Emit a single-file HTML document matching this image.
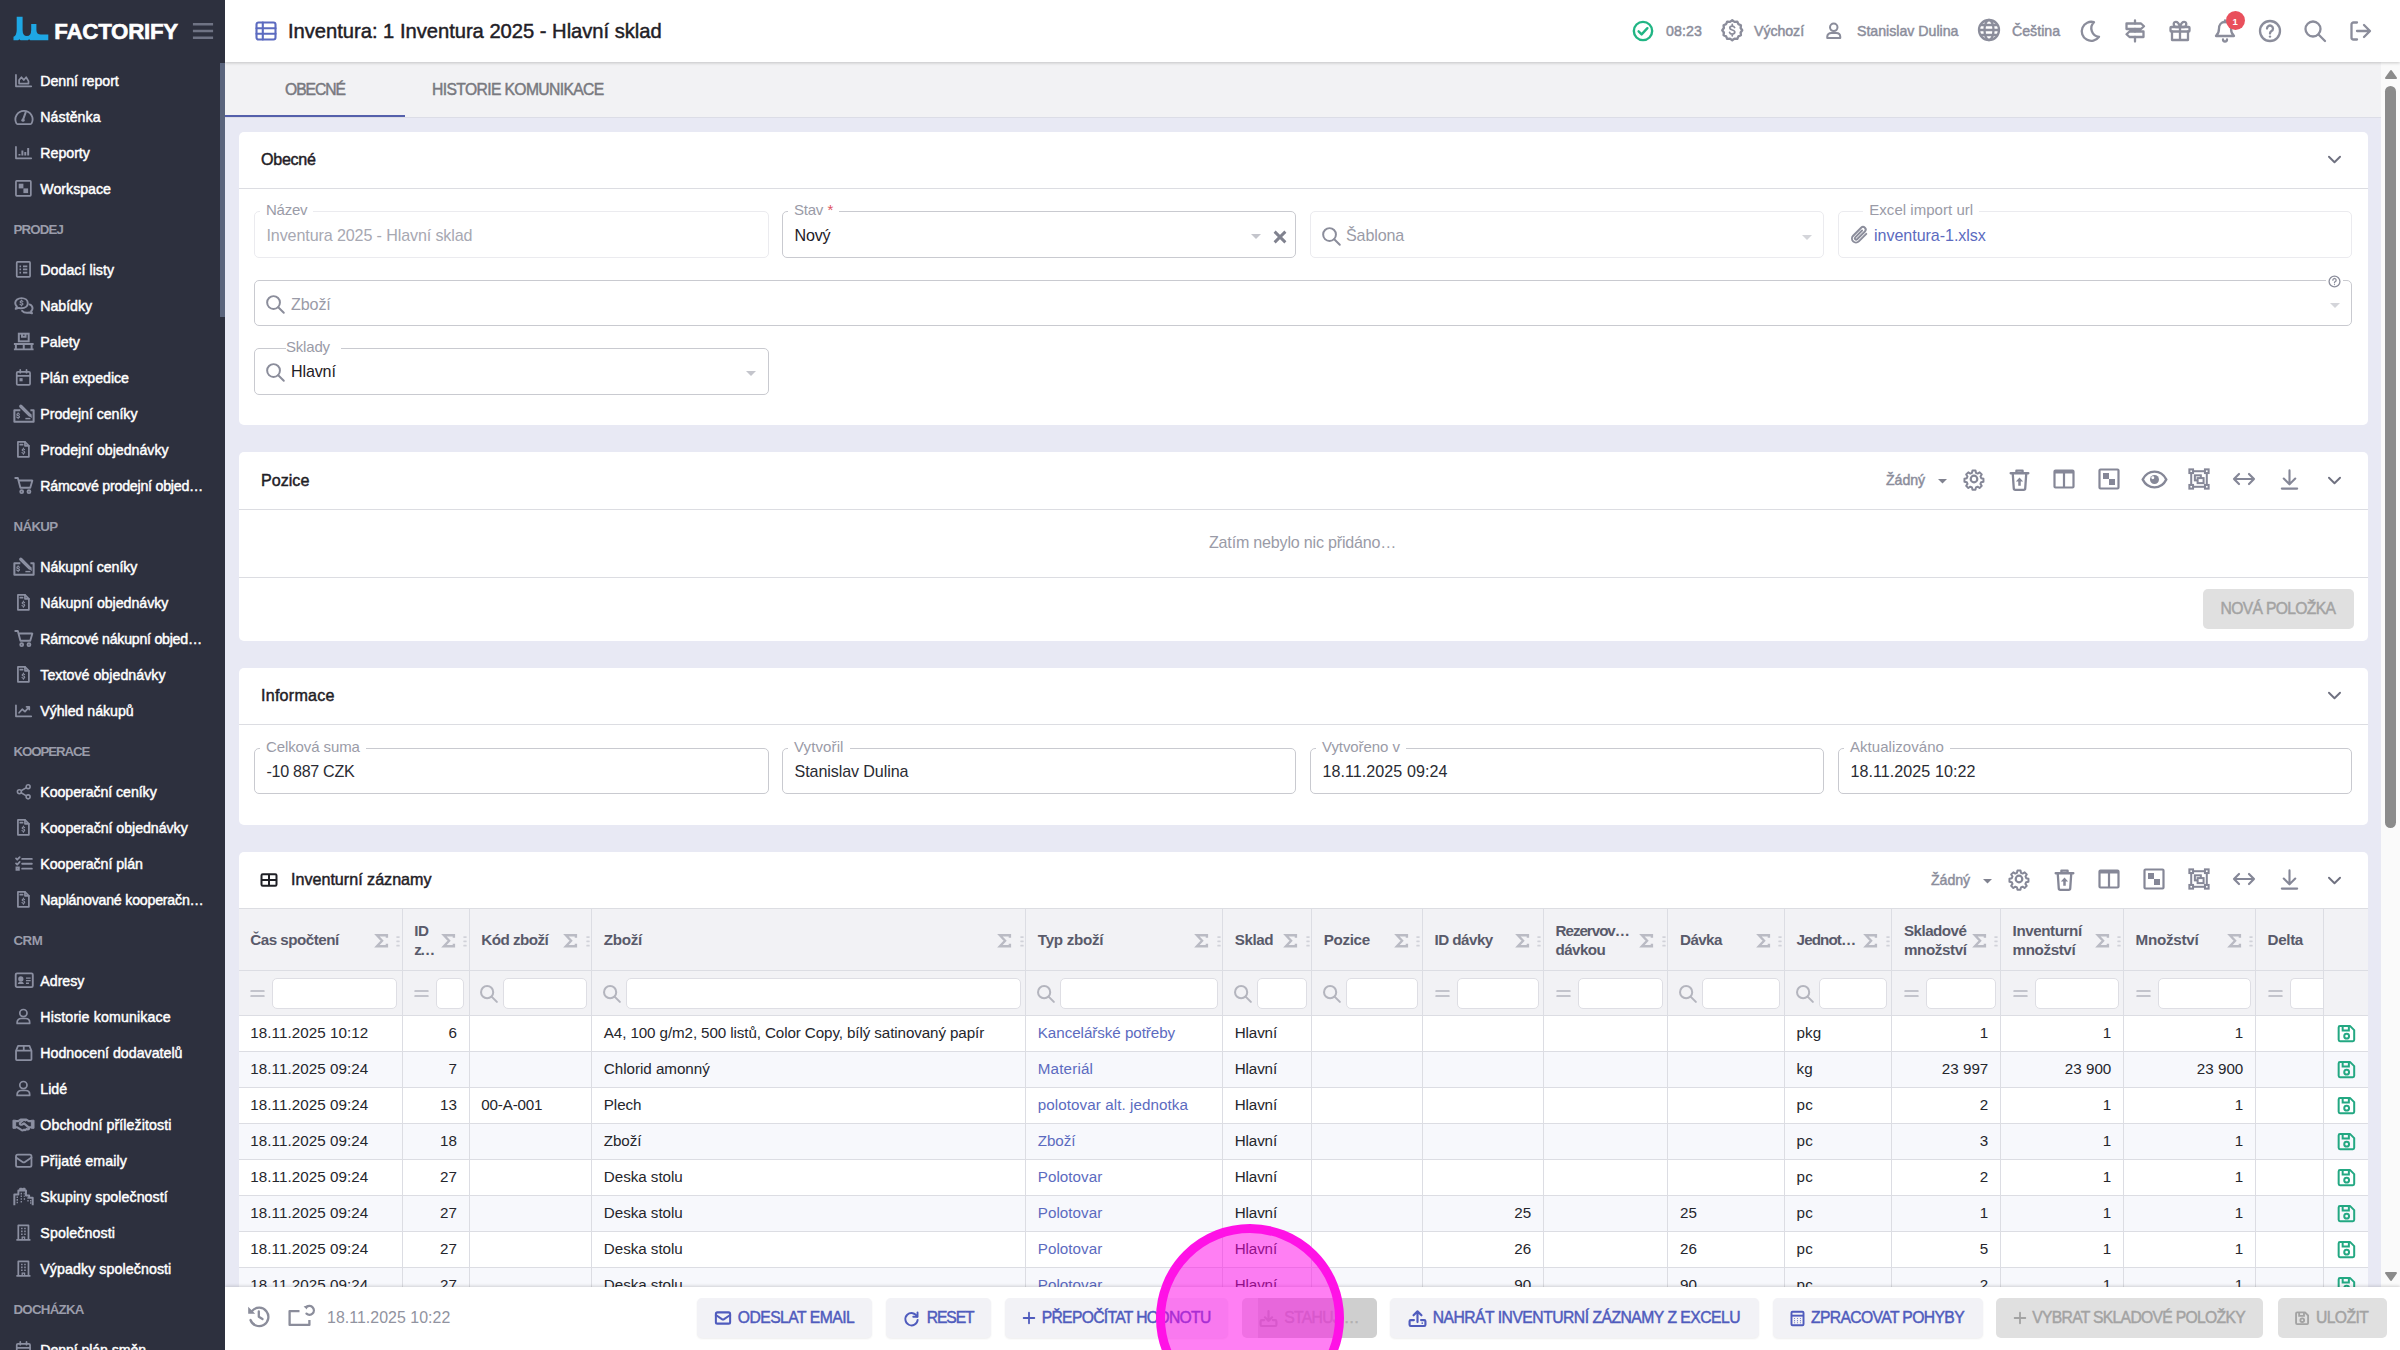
<!DOCTYPE html><html lang="cs"><head><meta charset="utf-8"><title>Inventura</title><style>
*{box-sizing:border-box;margin:0;padding:0}
html,body{width:2400px;height:1350px;overflow:hidden;background:#e8e9f4;font-family:"Liberation Sans",sans-serif;color:#1f2026}
.a{position:absolute}
.t{position:absolute;white-space:nowrap;height:20px;line-height:20px}
.ic{position:absolute;display:block;overflow:visible}
.card{position:absolute;left:239px;width:2129px;background:#fff;border-radius:5px}
.hl{position:absolute;left:0;right:0;height:1px;background:#dcdde2}
.fld{position:absolute;border:1px solid #c9cad0;border-radius:5px;background:#fff}
.fld.dis{border-color:#ebebef}
.lbl{position:absolute;background:#fff;padding:0 6px;height:16px;line-height:16px;white-space:nowrap;color:#9a9ba7}
.btn{position:absolute;top:1298px;height:40px;border-radius:5px;background:#f2f2f6;box-shadow:0 1px 2px rgba(0,0,0,.07);color:#4f5bbd}
.btn.dis{background:#e0e0e0;color:#a3a3a3;box-shadow:none}
.vl{position:absolute;top:0;bottom:0;width:1px;background:#dcdde3}
.fi{position:absolute;top:978px;height:31px;background:#fff;border:1px solid #dedee4;border-radius:5px}
</style></head><body><div class="a" style="left:225px;top:62px;width:2175px;height:56px;background:#f2f2f4;border-bottom:1px solid #dcdde6"></div><div class="a" style="left:225px;top:115px;width:180px;height:2px;background:#5560ab"></div><div class="t" style="left:285px;top:80px;"><span style="font-size:15.7px;letter-spacing:-1.076px;-webkit-text-stroke:0.45px;color:#78797f;">OBECNÉ</span></div><div class="t" style="left:432px;top:80px;"><span style="font-size:15.7px;letter-spacing:-0.631px;-webkit-text-stroke:0.45px;color:#78797f;">HISTORIE KOMUNIKACE</span></div><div class="card" style="top:132px;height:293px"><div class="hl" style="top:56px"></div></div><div class="t" style="left:261px;top:149px;"><span style="font-size:16.1px;letter-spacing:-0.273px;-webkit-text-stroke:0.45px;color:#1f2026;">Obecné</span></div><svg class="ic" width="19" height="19" viewBox="0 0 24 24" fill="none" stroke="currentColor" stroke-width="2.4" style="color:#6f7180;left:2324.5px;top:149.5px;"><path d="M5 8.500l7 7 7-7" stroke-linecap="round" stroke-linejoin="round"/></svg><div class="fld dis" style="left:254px;top:211px;width:515px;height:47px"></div><div class="lbl" style="left:260px;top:201.5px;"><span style="font-size:15px;letter-spacing:-0.244px;color:#9a9ba7;">Název</span></div><div class="t" style="left:266.5px;top:225px;"><span style="font-size:16.1px;letter-spacing:-0.118px;color:#a7a8b2;">Inventura 2025 - Hlavní sklad</span></div><div class="fld" style="left:782px;top:211px;width:514px;height:47px"></div><div class="lbl" style="left:788px;top:201.5px;"><span style="font-size:15px;letter-spacing:-0.219px;color:#9a9ba7;">Stav</span><span style="font-size:15px;letter-spacing:0.086px;color:#e0525e;"> *</span></div><div class="t" style="left:794.5px;top:225px;"><span style="font-size:16.1px;letter-spacing:-0.180px;color:#1f2026;">Nový</span></div><svg class="ic" style="left:1250.5px;top:234.0px" width="10" height="5.0" viewBox="0 0 10 5"><path d="M0 0h10L5 5z" fill="#c4c5cc"/></svg><svg class="ic" style="left:1272.500px;top:229.500px" width="14" height="14" viewBox="0 0 13 13"><path d="M1.500 1.500l10 10M11.500 1.500l-10 10" stroke="#80828f" stroke-width="2.700"/></svg><div class="fld dis" style="left:1310px;top:211px;width:514px;height:47px"></div><svg class="ic" width="20.5" height="20.5" viewBox="0 0 24 24" fill="none" stroke="currentColor" stroke-width="2.3" style="color:#8b8d9b;left:1320.55px;top:225.55px;"><circle cx="10" cy="10" r="7.500"/><path d="M15.500 15.500L22 22" stroke-linecap="round"/></svg><div class="t" style="left:1346px;top:225px;"><span style="font-size:16.1px;letter-spacing:-0.141px;color:#9a9ba7;">Šablona</span></div><svg class="ic" style="left:1801.5px;top:234.5px" width="10" height="5.0" viewBox="0 0 10 5"><path d="M0 0h10L5 5z" fill="#d4d5da"/></svg><div class="fld dis" style="left:1838px;top:211px;width:514px;height:47px"></div><div class="lbl" style="left:1863.3px;top:201.5px;"><span style="font-size:15px;letter-spacing:0.031px;color:#9a9ba7;">Excel import url</span></div><svg class="ic" width="22.5" height="22.5" viewBox="0 0 24 24" fill="none" stroke="currentColor" stroke-width="2.1" style="color:#8b8d9b;left:1847.75px;top:224.25px;"><path d="M19.500 10.500l-8 8a4.200 4.200 0 0 1-6-6l8.500-8.500a2.800 2.800 0 0 1 4 4l-8.300 8.300a1.400 1.400 0 0 1-2-2l7.300-7.300" stroke-linecap="round" stroke-linejoin="round"/></svg><div class="t" style="left:1874px;top:225px;"><span style="font-size:16.1px;letter-spacing:-0.053px;color:#5c6bc0;">inventura-1.xlsx</span></div><div class="fld" style="left:254px;top:280px;width:2098px;height:46px"></div><svg class="ic" width="20.5" height="20.5" viewBox="0 0 24 24" fill="none" stroke="currentColor" stroke-width="2.3" style="color:#8b8d9b;left:264.95px;top:294.05px;"><circle cx="10" cy="10" r="7.500"/><path d="M15.500 15.500L22 22" stroke-linecap="round"/></svg><div class="t" style="left:291px;top:294px;"><span style="font-size:16.1px;letter-spacing:-0.113px;color:#9a9ba7;">Zboží</span></div><div class="a" style="left:2326px;top:273px;width:17px;height:16px;background:#fff"></div><svg class="ic" width="13" height="13" viewBox="0 0 24 24" fill="none" stroke="currentColor" stroke-width="2.4" style="color:#8b8d9b;left:2327.8px;top:274.5px;"><circle cx="12" cy="12" r="10"/><path d="M9 9.500a3 3 0 1 1 4.500 2.600c-1 .6-1.500 1.200-1.500 2.400" stroke-linecap="round" stroke-linejoin="round"/><circle cx="12" cy="17.600" r="1.200" fill="currentColor" stroke="none"/></svg><svg class="ic" style="left:2330.0px;top:302.5px" width="10" height="5.0" viewBox="0 0 10 5"><path d="M0 0h10L5 5z" fill="#d4d5da"/></svg><div class="fld" style="left:254px;top:348px;width:515px;height:47px"></div><div class="lbl" style="left:286px;top:338.5px;padding:0 11px 0 0;"><span style="font-size:15px;letter-spacing:-0.193px;color:#9a9ba7;">Sklady</span></div><svg class="ic" width="20.5" height="20.5" viewBox="0 0 24 24" fill="none" stroke="currentColor" stroke-width="2.3" style="color:#8b8d9b;left:264.95px;top:362.05px;"><circle cx="10" cy="10" r="7.500"/><path d="M15.500 15.500L22 22" stroke-linecap="round"/></svg><div class="t" style="left:291px;top:361px;"><span style="font-size:16.1px;letter-spacing:-0.154px;color:#1f2026;">Hlavní</span></div><svg class="ic" style="left:745.5px;top:371.0px" width="10" height="5.0" viewBox="0 0 10 5"><path d="M0 0h10L5 5z" fill="#c4c5cc"/></svg><div class="card" style="top:452px;height:188.500px"><div class="hl" style="top:57px"></div><div class="hl" style="top:125px"></div></div><div class="t" style="left:261px;top:470px;"><span style="font-size:16.1px;letter-spacing:0.016px;-webkit-text-stroke:0.45px;color:#1f2026;">Pozice</span></div><div class="t" style="left:1886px;top:470px;"><span style="font-size:14.2px;letter-spacing:-0.078px;-webkit-text-stroke:0.45px;color:#8b8d9b;">Žádný</span></div><svg class="ic" style="left:1937.5px;top:479.25px" width="9" height="4.5" viewBox="0 0 10 5"><path d="M0 0h10L5 5z" fill="#80828f"/></svg><svg class="ic" width="24" height="24" viewBox="0 0 24 24" fill="none" stroke="currentColor" stroke-width="2.2" style="color:#858797;left:1961.5px;top:467.3px;"><circle cx="12" cy="12" r="3.300"/><path d="M10.300 2.500h3.400l.5 2.600 1.800.9 2.300-1.400 2.300 2.400-1.400 2.200.8 1.900 2.500.6v3.300l-2.600.6-.8 1.800 1.500 2.200-2.400 2.400-2.200-1.500-1.800.8-.6 2.600h-3.300l-.6-2.600-1.800-.8-2.200 1.500-2.400-2.400 1.500-2.200-.8-1.800-2.600-.6v-3.300l2.600-.6.800-1.900-1.500-2.200 2.400-2.400 2.200 1.400 1.800-.9z" stroke-linejoin="round" transform="translate(12 12) scale(.9) translate(-12 -12)"/></svg><svg class="ic" width="25" height="25" viewBox="0 0 24 24" fill="none" stroke="currentColor" stroke-width="2.2" style="color:#858797;left:2006.5px;top:466.8px;"><path d="M3.500 6h17M9 6V3.500h6V6M5.500 6l1 14.500a1.500 1.500 0 0 0 1.500 1.500h8a1.500 1.500 0 0 0 1.500-1.500l1-14.500" stroke-linecap="round" stroke-linejoin="round"/><path d="M12 10l-3.500 4h2.300v4h2.400v-4h2.300z" fill="currentColor" stroke="none"/></svg><svg class="ic" width="24" height="24" viewBox="0 0 24 24" fill="none" stroke="currentColor" stroke-width="2.2" style="color:#858797;left:2052.0px;top:467.3px;"><rect x="2.500" y="3.500" width="19" height="17" rx="1"/><path d="M2.500 5h19" stroke-width="3"/><path d="M12 4v16.500"/></svg><svg class="ic" width="24" height="24" viewBox="0 0 24 24" fill="none" stroke="currentColor" stroke-width="2.2" style="color:#858797;left:2097.0px;top:467.3px;"><rect x="2.500" y="2.500" width="19" height="19" rx="1"/><rect x="6" y="6" width="6" height="6" fill="currentColor" stroke="none"/><rect x="12" y="12" width="6" height="6" fill="currentColor" stroke="none"/></svg><svg class="ic" width="27" height="27" viewBox="0 0 24 24" fill="none" stroke="currentColor" stroke-width="2.2" style="color:#858797;left:2140.5px;top:465.8px;"><path d="M1.500 12C4 7 8 5 12 5s8 2 10.500 7C20 17 16 19 12 19S4 17 1.500 12z" stroke-linejoin="round"/><circle cx="12" cy="12" r="4" fill="currentColor" stroke="none"/><circle cx="10.500" cy="10.500" r="1.300" fill="#fff" stroke="none"/></svg><svg class="ic" width="22" height="22" viewBox="0 0 24 24" fill="none" stroke="currentColor" stroke-width="2.2" style="color:#858797;left:2188.0px;top:468.3px;"><rect x="3.500" y="3.500" width="17" height="17"/><rect x="1.500" y="1.500" width="4" height="4" fill="#fff"/><rect x="18.500" y="1.500" width="4" height="4" fill="#fff"/><rect x="1.500" y="18.500" width="4" height="4" fill="#fff"/><rect x="18.500" y="18.500" width="4" height="4" fill="#fff"/><rect x="7.500" y="8" width="6.500" height="5.500"/><rect x="10.500" y="11" width="6.500" height="5.500" fill="#fff"/></svg><svg class="ic" width="24" height="24" viewBox="0 0 24 24" fill="none" stroke="currentColor" stroke-width="2.2" style="color:#858797;left:2232.0px;top:467.3px;"><path d="M2 12h20M7 7l-5 5 5 5M17 7l5 5-5 5" stroke-linecap="round" stroke-linejoin="round"/></svg><svg class="ic" width="23" height="23" viewBox="0 0 24 24" fill="none" stroke="currentColor" stroke-width="2.2" style="color:#858797;left:2277.5px;top:467.8px;"><path d="M12 2.500v14M6 11l6 6 6-6M4 21.500h16" stroke-linecap="round" stroke-linejoin="round"/></svg><svg class="ic" width="19" height="19" viewBox="0 0 24 24" fill="none" stroke="currentColor" stroke-width="2.4" style="color:#6f7180;left:2324.5px;top:470.5px;"><path d="M5 8.500l7 7 7-7" stroke-linecap="round" stroke-linejoin="round"/></svg><div class="t" style="left:1209px;top:532px;"><span style="font-size:16.1px;letter-spacing:-0.209px;color:#9a9ba7;">Zatím nebylo nic přidáno…</span></div><div class="a" style="left:2203.300px;top:589.300px;width:150.700px;height:40px;border-radius:5px;background:#e0e0e0"></div><div class="t" style="left:2220.5px;top:599px;"><span style="font-size:15.7px;letter-spacing:-0.674px;-webkit-text-stroke:0.45px;color:#a3a3a3;">NOVÁ POLOŽKA</span></div><div class="card" style="top:668.300px;height:156.700px"><div class="hl" style="top:56px"></div></div><div class="t" style="left:261px;top:685px;"><span style="font-size:16.1px;letter-spacing:0.241px;-webkit-text-stroke:0.45px;color:#1f2026;">Informace</span></div><svg class="ic" width="19" height="19" viewBox="0 0 24 24" fill="none" stroke="currentColor" stroke-width="2.4" style="color:#6f7180;left:2324.5px;top:686.0px;"><path d="M5 8.500l7 7 7-7" stroke-linecap="round" stroke-linejoin="round"/></svg><div class="fld" style="left:254px;top:748px;width:515px;height:46px"></div><div class="lbl" style="left:260px;top:738.5px;"><span style="font-size:15px;letter-spacing:-0.105px;color:#9a9ba7;">Celková suma</span></div><div class="t" style="left:266.5px;top:761px;"><span style="font-size:16.1px;letter-spacing:-0.307px;color:#2a2b33;">-10 887 CZK</span></div><div class="fld" style="left:782px;top:748px;width:514px;height:46px"></div><div class="lbl" style="left:788px;top:738.5px;"><span style="font-size:15px;letter-spacing:0.119px;color:#9a9ba7;">Vytvořil</span></div><div class="t" style="left:794.5px;top:761px;"><span style="font-size:16.1px;letter-spacing:-0.093px;color:#2a2b33;">Stanislav Dulina</span></div><div class="fld" style="left:1310px;top:748px;width:514px;height:46px"></div><div class="lbl" style="left:1316px;top:738.5px;"><span style="font-size:15px;letter-spacing:-0.067px;color:#9a9ba7;">Vytvořeno v</span></div><div class="t" style="left:1322.5px;top:761px;"><span style="font-size:16.1px;letter-spacing:0.051px;color:#2a2b33;">18.11.2025 09:24</span></div><div class="fld" style="left:1838px;top:748px;width:514px;height:46px"></div><div class="lbl" style="left:1844px;top:738.5px;"><span style="font-size:15px;letter-spacing:0.042px;color:#9a9ba7;">Aktualizováno</span></div><div class="t" style="left:1850.5px;top:761px;"><span style="font-size:16.1px;letter-spacing:0.051px;color:#2a2b33;">18.11.2025 10:22</span></div><div class="card" style="top:852px;height:440px;border-radius:5px 5px 0 0"></div><svg class="ic" width="20" height="20" viewBox="0 0 24 24" fill="none" stroke="currentColor" stroke-width="2.4" style="color:#1f2026;left:259.0px;top:870.0px;"><rect x="3" y="5" width="18" height="14" rx="1.5"/><path d="M3 12h18M12 5v14"/></svg><div class="t" style="left:291px;top:869px;"><span style="font-size:16.1px;letter-spacing:0.005px;-webkit-text-stroke:0.45px;color:#1f2026;">Inventurní záznamy</span></div><div class="t" style="left:1931px;top:870px;"><span style="font-size:14.2px;letter-spacing:-0.078px;-webkit-text-stroke:0.45px;color:#8b8d9b;">Žádný</span></div><svg class="ic" style="left:1982.5px;top:879.25px" width="9" height="4.5" viewBox="0 0 10 5"><path d="M0 0h10L5 5z" fill="#80828f"/></svg><svg class="ic" width="24" height="24" viewBox="0 0 24 24" fill="none" stroke="currentColor" stroke-width="2.2" style="color:#858797;left:2007.0px;top:867.3px;"><circle cx="12" cy="12" r="3.300"/><path d="M10.300 2.500h3.400l.5 2.600 1.800.9 2.300-1.400 2.300 2.400-1.400 2.200.8 1.900 2.500.6v3.300l-2.600.6-.8 1.800 1.500 2.200-2.400 2.400-2.200-1.500-1.800.8-.6 2.600h-3.300l-.6-2.600-1.800-.8-2.200 1.500-2.400-2.400 1.500-2.200-.8-1.800-2.600-.6v-3.300l2.600-.6.800-1.900-1.500-2.200 2.400-2.400 2.200 1.400 1.800-.9z" stroke-linejoin="round" transform="translate(12 12) scale(.9) translate(-12 -12)"/></svg><svg class="ic" width="25" height="25" viewBox="0 0 24 24" fill="none" stroke="currentColor" stroke-width="2.2" style="color:#858797;left:2051.5px;top:866.8px;"><path d="M3.500 6h17M9 6V3.500h6V6M5.500 6l1 14.500a1.500 1.500 0 0 0 1.500 1.500h8a1.500 1.500 0 0 0 1.500-1.500l1-14.500" stroke-linecap="round" stroke-linejoin="round"/><path d="M12 10l-3.500 4h2.300v4h2.400v-4h2.300z" fill="currentColor" stroke="none"/></svg><svg class="ic" width="24" height="24" viewBox="0 0 24 24" fill="none" stroke="currentColor" stroke-width="2.2" style="color:#858797;left:2097.0px;top:867.3px;"><rect x="2.500" y="3.500" width="19" height="17" rx="1"/><path d="M2.500 5h19" stroke-width="3"/><path d="M12 4v16.500"/></svg><svg class="ic" width="24" height="24" viewBox="0 0 24 24" fill="none" stroke="currentColor" stroke-width="2.2" style="color:#858797;left:2142.0px;top:867.3px;"><rect x="2.500" y="2.500" width="19" height="19" rx="1"/><rect x="6" y="6" width="6" height="6" fill="currentColor" stroke="none"/><rect x="12" y="12" width="6" height="6" fill="currentColor" stroke="none"/></svg><svg class="ic" width="22" height="22" viewBox="0 0 24 24" fill="none" stroke="currentColor" stroke-width="2.2" style="color:#858797;left:2188.0px;top:868.3px;"><rect x="3.500" y="3.500" width="17" height="17"/><rect x="1.500" y="1.500" width="4" height="4" fill="#fff"/><rect x="18.500" y="1.500" width="4" height="4" fill="#fff"/><rect x="1.500" y="18.500" width="4" height="4" fill="#fff"/><rect x="18.500" y="18.500" width="4" height="4" fill="#fff"/><rect x="7.500" y="8" width="6.500" height="5.500"/><rect x="10.500" y="11" width="6.500" height="5.500" fill="#fff"/></svg><svg class="ic" width="24" height="24" viewBox="0 0 24 24" fill="none" stroke="currentColor" stroke-width="2.2" style="color:#858797;left:2232.0px;top:867.3px;"><path d="M2 12h20M7 7l-5 5 5 5M17 7l5 5-5 5" stroke-linecap="round" stroke-linejoin="round"/></svg><svg class="ic" width="23" height="23" viewBox="0 0 24 24" fill="none" stroke="currentColor" stroke-width="2.2" style="color:#858797;left:2277.5px;top:867.8px;"><path d="M12 2.500v14M6 11l6 6 6-6M4 21.500h16" stroke-linecap="round" stroke-linejoin="round"/></svg><svg class="ic" width="19" height="19" viewBox="0 0 24 24" fill="none" stroke="currentColor" stroke-width="2.4" style="color:#6f7180;left:2324.5px;top:870.5px;"><path d="M5 8.500l7 7 7-7" stroke-linecap="round" stroke-linejoin="round"/></svg><div class="a" style="left:239px;top:908px;width:2129.300px;height:107.500px;background:#f2f2f5;border-top:1px solid #dcdde2"></div><div class="a" style="left:239px;top:970px;width:2129.300px;height:1px;background:#dcdde3"></div><div class="a" style="left:239px;top:1015px;width:2129.300px;height:36px;background:#fff;border-top:1px solid #dcdde3"></div><div class="a" style="left:239px;top:1051px;width:2129.300px;height:36px;background:#f7f8fc;border-top:1px solid #dcdde3"></div><div class="a" style="left:239px;top:1087px;width:2129.300px;height:36px;background:#fff;border-top:1px solid #dcdde3"></div><div class="a" style="left:239px;top:1123px;width:2129.300px;height:36px;background:#f7f8fc;border-top:1px solid #dcdde3"></div><div class="a" style="left:239px;top:1159px;width:2129.300px;height:36px;background:#fff;border-top:1px solid #dcdde3"></div><div class="a" style="left:239px;top:1195px;width:2129.300px;height:36px;background:#f7f8fc;border-top:1px solid #dcdde3"></div><div class="a" style="left:239px;top:1231px;width:2129.300px;height:36px;background:#fff;border-top:1px solid #dcdde3"></div><div class="a" style="left:239px;top:1267px;width:2129.300px;height:36px;background:#f7f8fc;border-top:1px solid #dcdde3"></div><div class="a" style="left:401.5px;top:908px;width:1px;height:382px;background:#dcdde3"></div><div class="a" style="left:468.5px;top:908px;width:1px;height:382px;background:#dcdde3"></div><div class="a" style="left:591.0px;top:908px;width:1px;height:382px;background:#dcdde3"></div><div class="a" style="left:1025.0px;top:908px;width:1px;height:382px;background:#dcdde3"></div><div class="a" style="left:1222.0px;top:908px;width:1px;height:382px;background:#dcdde3"></div><div class="a" style="left:1311.0px;top:908px;width:1px;height:382px;background:#dcdde3"></div><div class="a" style="left:1421.8px;top:908px;width:1px;height:382px;background:#dcdde3"></div><div class="a" style="left:1542.8px;top:908px;width:1px;height:382px;background:#dcdde3"></div><div class="a" style="left:1667.2px;top:908px;width:1px;height:382px;background:#dcdde3"></div><div class="a" style="left:1783.8px;top:908px;width:1px;height:382px;background:#dcdde3"></div><div class="a" style="left:1891.2px;top:908px;width:1px;height:382px;background:#dcdde3"></div><div class="a" style="left:1999.8px;top:908px;width:1px;height:382px;background:#dcdde3"></div><div class="a" style="left:2122.8px;top:908px;width:1px;height:382px;background:#dcdde3"></div><div class="a" style="left:2254.8px;top:908px;width:1px;height:382px;background:#dcdde3"></div><div class="a" style="left:2322.8px;top:908px;width:1px;height:382px;background:#dcdde3"></div><div class="t" style="left:250.3px;top:930px;"><span style="font-size:15.2px;letter-spacing:-0.504px;font-weight:700;color:#595a6a;">Čas spočtení</span></div><svg class="ic" width="15.5" height="15.5" viewBox="0 0 24 24" fill="none" stroke="currentColor" stroke-width="3.7" style="color:#babbc4;left:373.65px;top:932.55px;"><path d="M20 7.500V3.500H4.500L12.500 12 4.500 20.500H20v-4" stroke-linejoin="miter"/></svg><svg class="ic" style="left:396px;top:935.800px" width="4" height="11" viewBox="0 0 4 11"><rect x=".3" y=".2" width="3.400" height="1.700" rx=".6" fill="#d1d2d9"/><rect x=".3" y="4.500" width="3.400" height="1.700" rx=".6" fill="#d1d2d9"/><rect x=".3" y="8.800" width="3.400" height="1.700" rx=".6" fill="#d1d2d9"/></svg><div class="t" style="left:414.3px;top:921px;"><span style="font-size:15.2px;letter-spacing:-0.438px;font-weight:700;color:#595a6a;">ID</span></div><div class="t" style="left:414.3px;top:940px;"><span style="font-size:15.2px;letter-spacing:-1.898px;font-weight:700;color:#595a6a;">z…</span></div><svg class="ic" width="15.5" height="15.5" viewBox="0 0 24 24" fill="none" stroke="currentColor" stroke-width="3.7" style="color:#babbc4;left:440.65px;top:932.55px;"><path d="M20 7.500V3.500H4.500L12.500 12 4.500 20.500H20v-4" stroke-linejoin="miter"/></svg><svg class="ic" style="left:463px;top:935.800px" width="4" height="11" viewBox="0 0 4 11"><rect x=".3" y=".2" width="3.400" height="1.700" rx=".6" fill="#d1d2d9"/><rect x=".3" y="4.500" width="3.400" height="1.700" rx=".6" fill="#d1d2d9"/><rect x=".3" y="8.800" width="3.400" height="1.700" rx=".6" fill="#d1d2d9"/></svg><div class="t" style="left:481.3px;top:930px;"><span style="font-size:15.2px;letter-spacing:-0.528px;font-weight:700;color:#595a6a;">Kód zboží</span></div><svg class="ic" width="15.5" height="15.5" viewBox="0 0 24 24" fill="none" stroke="currentColor" stroke-width="3.7" style="color:#babbc4;left:563.15px;top:932.55px;"><path d="M20 7.500V3.500H4.500L12.500 12 4.500 20.500H20v-4" stroke-linejoin="miter"/></svg><svg class="ic" style="left:585.5px;top:935.800px" width="4" height="11" viewBox="0 0 4 11"><rect x=".3" y=".2" width="3.400" height="1.700" rx=".6" fill="#d1d2d9"/><rect x=".3" y="4.500" width="3.400" height="1.700" rx=".6" fill="#d1d2d9"/><rect x=".3" y="8.800" width="3.400" height="1.700" rx=".6" fill="#d1d2d9"/></svg><div class="t" style="left:603.8px;top:930px;"><span style="font-size:15.2px;letter-spacing:-0.312px;font-weight:700;color:#595a6a;">Zboží</span></div><svg class="ic" width="15.5" height="15.5" viewBox="0 0 24 24" fill="none" stroke="currentColor" stroke-width="3.7" style="color:#babbc4;left:997.15px;top:932.55px;"><path d="M20 7.500V3.500H4.500L12.500 12 4.500 20.500H20v-4" stroke-linejoin="miter"/></svg><svg class="ic" style="left:1019.5px;top:935.800px" width="4" height="11" viewBox="0 0 4 11"><rect x=".3" y=".2" width="3.400" height="1.700" rx=".6" fill="#d1d2d9"/><rect x=".3" y="4.500" width="3.400" height="1.700" rx=".6" fill="#d1d2d9"/><rect x=".3" y="8.800" width="3.400" height="1.700" rx=".6" fill="#d1d2d9"/></svg><div class="t" style="left:1037.8px;top:930px;"><span style="font-size:15.2px;letter-spacing:-0.297px;font-weight:700;color:#595a6a;">Typ zboží</span></div><svg class="ic" width="15.5" height="15.5" viewBox="0 0 24 24" fill="none" stroke="currentColor" stroke-width="3.7" style="color:#babbc4;left:1194.15px;top:932.55px;"><path d="M20 7.500V3.500H4.500L12.500 12 4.500 20.500H20v-4" stroke-linejoin="miter"/></svg><svg class="ic" style="left:1216.5px;top:935.800px" width="4" height="11" viewBox="0 0 4 11"><rect x=".3" y=".2" width="3.400" height="1.700" rx=".6" fill="#d1d2d9"/><rect x=".3" y="4.500" width="3.400" height="1.700" rx=".6" fill="#d1d2d9"/><rect x=".3" y="8.800" width="3.400" height="1.700" rx=".6" fill="#d1d2d9"/></svg><div class="t" style="left:1234.8px;top:930px;"><span style="font-size:15.2px;letter-spacing:-0.472px;font-weight:700;color:#595a6a;">Sklad</span></div><svg class="ic" width="15.5" height="15.5" viewBox="0 0 24 24" fill="none" stroke="currentColor" stroke-width="3.7" style="color:#babbc4;left:1283.15px;top:932.55px;"><path d="M20 7.500V3.500H4.500L12.500 12 4.500 20.500H20v-4" stroke-linejoin="miter"/></svg><svg class="ic" style="left:1305.5px;top:935.800px" width="4" height="11" viewBox="0 0 4 11"><rect x=".3" y=".2" width="3.400" height="1.700" rx=".6" fill="#d1d2d9"/><rect x=".3" y="4.500" width="3.400" height="1.700" rx=".6" fill="#d1d2d9"/><rect x=".3" y="8.800" width="3.400" height="1.700" rx=".6" fill="#d1d2d9"/></svg><div class="t" style="left:1323.8px;top:930px;"><span style="font-size:15.2px;letter-spacing:-0.352px;font-weight:700;color:#595a6a;">Pozice</span></div><svg class="ic" width="15.5" height="15.5" viewBox="0 0 24 24" fill="none" stroke="currentColor" stroke-width="3.7" style="color:#babbc4;left:1393.95px;top:932.55px;"><path d="M20 7.500V3.500H4.500L12.500 12 4.500 20.500H20v-4" stroke-linejoin="miter"/></svg><svg class="ic" style="left:1416.3px;top:935.800px" width="4" height="11" viewBox="0 0 4 11"><rect x=".3" y=".2" width="3.400" height="1.700" rx=".6" fill="#d1d2d9"/><rect x=".3" y="4.500" width="3.400" height="1.700" rx=".6" fill="#d1d2d9"/><rect x=".3" y="8.800" width="3.400" height="1.700" rx=".6" fill="#d1d2d9"/></svg><div class="t" style="left:1434.6px;top:930px;"><span style="font-size:15.2px;letter-spacing:-0.547px;font-weight:700;color:#595a6a;">ID dávky</span></div><svg class="ic" width="15.5" height="15.5" viewBox="0 0 24 24" fill="none" stroke="currentColor" stroke-width="3.7" style="color:#babbc4;left:1514.95px;top:932.55px;"><path d="M20 7.500V3.500H4.500L12.500 12 4.500 20.500H20v-4" stroke-linejoin="miter"/></svg><svg class="ic" style="left:1537.3px;top:935.800px" width="4" height="11" viewBox="0 0 4 11"><rect x=".3" y=".2" width="3.400" height="1.700" rx=".6" fill="#d1d2d9"/><rect x=".3" y="4.500" width="3.400" height="1.700" rx=".6" fill="#d1d2d9"/><rect x=".3" y="8.800" width="3.400" height="1.700" rx=".6" fill="#d1d2d9"/></svg><div class="t" style="left:1555.6px;top:921px;"><span style="font-size:15.2px;letter-spacing:-1.045px;font-weight:700;color:#595a6a;">Rezervov…</span></div><div class="t" style="left:1555.6px;top:940px;"><span style="font-size:15.2px;letter-spacing:-0.620px;font-weight:700;color:#595a6a;">dávkou</span></div><svg class="ic" width="15.5" height="15.5" viewBox="0 0 24 24" fill="none" stroke="currentColor" stroke-width="3.7" style="color:#babbc4;left:1639.3500000000001px;top:932.55px;"><path d="M20 7.500V3.500H4.500L12.500 12 4.500 20.500H20v-4" stroke-linejoin="miter"/></svg><svg class="ic" style="left:1661.7px;top:935.800px" width="4" height="11" viewBox="0 0 4 11"><rect x=".3" y=".2" width="3.400" height="1.700" rx=".6" fill="#d1d2d9"/><rect x=".3" y="4.500" width="3.400" height="1.700" rx=".6" fill="#d1d2d9"/><rect x=".3" y="8.800" width="3.400" height="1.700" rx=".6" fill="#d1d2d9"/></svg><div class="t" style="left:1680.0px;top:930px;"><span style="font-size:15.2px;letter-spacing:-0.588px;font-weight:700;color:#595a6a;">Dávka</span></div><svg class="ic" width="15.5" height="15.5" viewBox="0 0 24 24" fill="none" stroke="currentColor" stroke-width="3.7" style="color:#babbc4;left:1755.95px;top:932.55px;"><path d="M20 7.500V3.500H4.500L12.500 12 4.500 20.500H20v-4" stroke-linejoin="miter"/></svg><svg class="ic" style="left:1778.3px;top:935.800px" width="4" height="11" viewBox="0 0 4 11"><rect x=".3" y=".2" width="3.400" height="1.700" rx=".6" fill="#d1d2d9"/><rect x=".3" y="4.500" width="3.400" height="1.700" rx=".6" fill="#d1d2d9"/><rect x=".3" y="8.800" width="3.400" height="1.700" rx=".6" fill="#d1d2d9"/></svg><div class="t" style="left:1796.6px;top:930px;"><span style="font-size:15.2px;letter-spacing:-0.895px;font-weight:700;color:#595a6a;">Jednot…</span></div><svg class="ic" width="15.5" height="15.5" viewBox="0 0 24 24" fill="none" stroke="currentColor" stroke-width="3.7" style="color:#babbc4;left:1863.3500000000001px;top:932.55px;"><path d="M20 7.500V3.500H4.500L12.500 12 4.500 20.500H20v-4" stroke-linejoin="miter"/></svg><svg class="ic" style="left:1885.7px;top:935.800px" width="4" height="11" viewBox="0 0 4 11"><rect x=".3" y=".2" width="3.400" height="1.700" rx=".6" fill="#d1d2d9"/><rect x=".3" y="4.500" width="3.400" height="1.700" rx=".6" fill="#d1d2d9"/><rect x=".3" y="8.800" width="3.400" height="1.700" rx=".6" fill="#d1d2d9"/></svg><div class="t" style="left:1904.0px;top:921px;"><span style="font-size:15.2px;letter-spacing:-0.535px;font-weight:700;color:#595a6a;">Skladové</span></div><div class="t" style="left:1904.0px;top:940px;"><span style="font-size:15.2px;letter-spacing:-0.398px;font-weight:700;color:#595a6a;">množství</span></div><svg class="ic" width="15.5" height="15.5" viewBox="0 0 24 24" fill="none" stroke="currentColor" stroke-width="3.7" style="color:#babbc4;left:1971.95px;top:932.55px;"><path d="M20 7.500V3.500H4.500L12.500 12 4.500 20.500H20v-4" stroke-linejoin="miter"/></svg><svg class="ic" style="left:1994.3px;top:935.800px" width="4" height="11" viewBox="0 0 4 11"><rect x=".3" y=".2" width="3.400" height="1.700" rx=".6" fill="#d1d2d9"/><rect x=".3" y="4.500" width="3.400" height="1.700" rx=".6" fill="#d1d2d9"/><rect x=".3" y="8.800" width="3.400" height="1.700" rx=".6" fill="#d1d2d9"/></svg><div class="t" style="left:2012.6px;top:921px;"><span style="font-size:15.2px;letter-spacing:-0.428px;font-weight:700;color:#595a6a;">Inventurní</span></div><div class="t" style="left:2012.6px;top:940px;"><span style="font-size:15.2px;letter-spacing:-0.398px;font-weight:700;color:#595a6a;">množství</span></div><svg class="ic" width="15.5" height="15.5" viewBox="0 0 24 24" fill="none" stroke="currentColor" stroke-width="3.7" style="color:#babbc4;left:2094.9500000000003px;top:932.55px;"><path d="M20 7.500V3.500H4.500L12.500 12 4.500 20.500H20v-4" stroke-linejoin="miter"/></svg><svg class="ic" style="left:2117.3px;top:935.800px" width="4" height="11" viewBox="0 0 4 11"><rect x=".3" y=".2" width="3.400" height="1.700" rx=".6" fill="#d1d2d9"/><rect x=".3" y="4.500" width="3.400" height="1.700" rx=".6" fill="#d1d2d9"/><rect x=".3" y="8.800" width="3.400" height="1.700" rx=".6" fill="#d1d2d9"/></svg><div class="t" style="left:2135.6000000000004px;top:930px;"><span style="font-size:15.2px;letter-spacing:-0.275px;font-weight:700;color:#595a6a;">Množství</span></div><svg class="ic" width="15.5" height="15.5" viewBox="0 0 24 24" fill="none" stroke="currentColor" stroke-width="3.7" style="color:#babbc4;left:2226.9500000000003px;top:932.55px;"><path d="M20 7.500V3.500H4.500L12.500 12 4.500 20.500H20v-4" stroke-linejoin="miter"/></svg><svg class="ic" style="left:2249.3px;top:935.800px" width="4" height="11" viewBox="0 0 4 11"><rect x=".3" y=".2" width="3.400" height="1.700" rx=".6" fill="#d1d2d9"/><rect x=".3" y="4.500" width="3.400" height="1.700" rx=".6" fill="#d1d2d9"/><rect x=".3" y="8.800" width="3.400" height="1.700" rx=".6" fill="#d1d2d9"/></svg><div class="t" style="left:2267.6000000000004px;top:930px;"><span style="font-size:15.2px;letter-spacing:-0.356px;font-weight:700;color:#595a6a;">Delta</span></div><svg class="ic" width="17" height="17" viewBox="0 0 24 24" fill="none" stroke="currentColor" stroke-width="3.8" style="color:#b4b5be;left:249.3px;top:984.8px;"><path d="M3 8.500h18M3 15.500h18" stroke-linecap="round" stroke-width="2.400"/></svg><div class="fi" style="left:272px;width:125px;"></div><svg class="ic" width="17" height="17" viewBox="0 0 24 24" fill="none" stroke="currentColor" stroke-width="3.8" style="color:#b4b5be;left:413.3px;top:984.8px;"><path d="M3 8.500h18M3 15.500h18" stroke-linecap="round" stroke-width="2.400"/></svg><div class="fi" style="left:436px;width:28px;"></div><svg class="ic" width="19.5" height="19.5" viewBox="0 0 24 24" fill="none" stroke="currentColor" stroke-width="2.5" style="color:#b4b5be;left:479.25px;top:983.55px;"><circle cx="10" cy="10" r="7.500"/><path d="M15.500 15.500L22 22" stroke-linecap="round"/></svg><div class="fi" style="left:503px;width:84px;"></div><svg class="ic" width="19.5" height="19.5" viewBox="0 0 24 24" fill="none" stroke="currentColor" stroke-width="2.5" style="color:#b4b5be;left:601.75px;top:983.55px;"><circle cx="10" cy="10" r="7.500"/><path d="M15.500 15.500L22 22" stroke-linecap="round"/></svg><div class="fi" style="left:626px;width:395px;"></div><svg class="ic" width="19.5" height="19.5" viewBox="0 0 24 24" fill="none" stroke="currentColor" stroke-width="2.5" style="color:#b4b5be;left:1035.75px;top:983.55px;"><circle cx="10" cy="10" r="7.500"/><path d="M15.500 15.500L22 22" stroke-linecap="round"/></svg><div class="fi" style="left:1060px;width:158px;"></div><svg class="ic" width="19.5" height="19.5" viewBox="0 0 24 24" fill="none" stroke="currentColor" stroke-width="2.5" style="color:#b4b5be;left:1232.75px;top:983.55px;"><circle cx="10" cy="10" r="7.500"/><path d="M15.500 15.500L22 22" stroke-linecap="round"/></svg><div class="fi" style="left:1257px;width:50px;"></div><svg class="ic" width="19.5" height="19.5" viewBox="0 0 24 24" fill="none" stroke="currentColor" stroke-width="2.5" style="color:#b4b5be;left:1321.75px;top:983.55px;"><circle cx="10" cy="10" r="7.500"/><path d="M15.500 15.500L22 22" stroke-linecap="round"/></svg><div class="fi" style="left:1346px;width:72px;"></div><svg class="ic" width="17" height="17" viewBox="0 0 24 24" fill="none" stroke="currentColor" stroke-width="3.8" style="color:#b4b5be;left:1433.6px;top:984.8px;"><path d="M3 8.500h18M3 15.500h18" stroke-linecap="round" stroke-width="2.400"/></svg><div class="fi" style="left:1457px;width:82px;"></div><svg class="ic" width="17" height="17" viewBox="0 0 24 24" fill="none" stroke="currentColor" stroke-width="3.8" style="color:#b4b5be;left:1554.6px;top:984.8px;"><path d="M3 8.500h18M3 15.500h18" stroke-linecap="round" stroke-width="2.400"/></svg><div class="fi" style="left:1578px;width:85px;"></div><svg class="ic" width="19.5" height="19.5" viewBox="0 0 24 24" fill="none" stroke="currentColor" stroke-width="2.5" style="color:#b4b5be;left:1677.95px;top:983.55px;"><circle cx="10" cy="10" r="7.500"/><path d="M15.500 15.500L22 22" stroke-linecap="round"/></svg><div class="fi" style="left:1702px;width:78px;"></div><svg class="ic" width="19.5" height="19.5" viewBox="0 0 24 24" fill="none" stroke="currentColor" stroke-width="2.5" style="color:#b4b5be;left:1794.55px;top:983.55px;"><circle cx="10" cy="10" r="7.500"/><path d="M15.500 15.500L22 22" stroke-linecap="round"/></svg><div class="fi" style="left:1819px;width:68px;"></div><svg class="ic" width="17" height="17" viewBox="0 0 24 24" fill="none" stroke="currentColor" stroke-width="3.8" style="color:#b4b5be;left:1903.0px;top:984.8px;"><path d="M3 8.500h18M3 15.500h18" stroke-linecap="round" stroke-width="2.400"/></svg><div class="fi" style="left:1926px;width:70px;"></div><svg class="ic" width="17" height="17" viewBox="0 0 24 24" fill="none" stroke="currentColor" stroke-width="3.8" style="color:#b4b5be;left:2011.6px;top:984.8px;"><path d="M3 8.500h18M3 15.500h18" stroke-linecap="round" stroke-width="2.400"/></svg><div class="fi" style="left:2035px;width:84px;"></div><svg class="ic" width="17" height="17" viewBox="0 0 24 24" fill="none" stroke="currentColor" stroke-width="3.8" style="color:#b4b5be;left:2134.6000000000004px;top:984.8px;"><path d="M3 8.500h18M3 15.500h18" stroke-linecap="round" stroke-width="2.400"/></svg><div class="fi" style="left:2158px;width:93px;"></div><svg class="ic" width="17" height="17" viewBox="0 0 24 24" fill="none" stroke="currentColor" stroke-width="3.8" style="color:#b4b5be;left:2266.6000000000004px;top:984.8px;"><path d="M3 8.500h18M3 15.500h18" stroke-linecap="round" stroke-width="2.400"/></svg><div class="fi" style="left:2290px;width:33.30000000000018px;border-right:none;border-radius:5px 0 0 5px;"></div><div class="t" style="left:250.3px;top:1023px;"><span style="font-size:15.2px;letter-spacing:0.049px;color:#25262c;">18.11.2025 10:12</span></div><div class="t" style="right:1943px;top:1023px;"><span style="font-size:15.2px;letter-spacing:0.094px;color:#25262c;">6</span></div><div class="t" style="left:603.8px;top:1023px;"><span style="font-size:15.2px;letter-spacing:-0.104px;color:#25262c;">A4, 100 g/m2, 500 listů, Color Copy, bílý satinovaný papír</span></div><div class="t" style="left:1037.8px;top:1023px;"><span style="font-size:15.2px;letter-spacing:-0.058px;color:#5c6bc0;">Kancelářské potřeby</span></div><div class="t" style="left:1234.8px;top:1023px;"><span style="font-size:15.2px;letter-spacing:-0.146px;color:#25262c;">Hlavní</span></div><div class="t" style="left:1796.6px;top:1023px;"><span style="font-size:15.2px;letter-spacing:0.036px;color:#25262c;">pkg</span></div><div class="t" style="right:411.70000000000005px;top:1023px;"><span style="font-size:15.2px;letter-spacing:0.094px;color:#25262c;">1</span></div><div class="t" style="right:288.6999999999998px;top:1023px;"><span style="font-size:15.2px;letter-spacing:0.094px;color:#25262c;">1</span></div><div class="t" style="right:156.69999999999982px;top:1023px;"><span style="font-size:15.2px;letter-spacing:0.094px;color:#25262c;">1</span></div><svg class="ic" width="21.3" height="21.3" viewBox="0 0 24 24" fill="none" stroke="currentColor" stroke-width="2.25" style="color:#23a882;left:2335.65px;top:1022.9499999999999px;"><path d="M4.500 3.500h11.500l4.500 4.500v11a1.500 1.500 0 0 1-1.500 1.500h-14.500a1.500 1.500 0 0 1-1.500-1.500v-14a1.500 1.500 0 0 1 1.500-1.500z" stroke-linejoin="round"/><path d="M7.500 3.500v5h7v-5"/><circle cx="12" cy="14.800" r="2.700"/></svg><div class="t" style="left:250.3px;top:1059px;"><span style="font-size:15.2px;letter-spacing:0.049px;color:#25262c;">18.11.2025 09:24</span></div><div class="t" style="right:1943px;top:1059px;"><span style="font-size:15.2px;letter-spacing:0.094px;color:#25262c;">7</span></div><div class="t" style="left:603.8px;top:1059px;"><span style="font-size:15.2px;letter-spacing:-0.028px;color:#25262c;">Chlorid amonný</span></div><div class="t" style="left:1037.8px;top:1059px;"><span style="font-size:15.2px;letter-spacing:0.164px;color:#5c6bc0;">Materiál</span></div><div class="t" style="left:1234.8px;top:1059px;"><span style="font-size:15.2px;letter-spacing:-0.146px;color:#25262c;">Hlavní</span></div><div class="t" style="left:1796.6px;top:1059px;"><span style="font-size:15.2px;letter-spacing:0.016px;color:#25262c;">kg</span></div><div class="t" style="right:411.70000000000005px;top:1059px;"><span style="font-size:15.2px;letter-spacing:0.000px;color:#25262c;">23 997</span></div><div class="t" style="right:288.6999999999998px;top:1059px;"><span style="font-size:15.2px;letter-spacing:0.000px;color:#25262c;">23 900</span></div><div class="t" style="right:156.69999999999982px;top:1059px;"><span style="font-size:15.2px;letter-spacing:0.000px;color:#25262c;">23 900</span></div><svg class="ic" width="21.3" height="21.3" viewBox="0 0 24 24" fill="none" stroke="currentColor" stroke-width="2.25" style="color:#23a882;left:2335.65px;top:1058.9499999999998px;"><path d="M4.500 3.500h11.500l4.500 4.500v11a1.500 1.500 0 0 1-1.500 1.500h-14.500a1.500 1.500 0 0 1-1.500-1.500v-14a1.500 1.500 0 0 1 1.500-1.500z" stroke-linejoin="round"/><path d="M7.500 3.500v5h7v-5"/><circle cx="12" cy="14.800" r="2.700"/></svg><div class="t" style="left:250.3px;top:1095px;"><span style="font-size:15.2px;letter-spacing:0.049px;color:#25262c;">18.11.2025 09:24</span></div><div class="t" style="right:1943px;top:1095px;"><span style="font-size:15.2px;letter-spacing:0.086px;color:#25262c;">13</span></div><div class="t" style="left:481.3px;top:1095px;"><span style="font-size:15.2px;letter-spacing:-0.188px;color:#25262c;">00-A-001</span></div><div class="t" style="left:603.8px;top:1095px;"><span style="font-size:15.2px;letter-spacing:-0.069px;color:#25262c;">Plech</span></div><div class="t" style="left:1037.8px;top:1095px;"><span style="font-size:15.2px;letter-spacing:0.072px;color:#5c6bc0;">polotovar alt. jednotka</span></div><div class="t" style="left:1234.8px;top:1095px;"><span style="font-size:15.2px;letter-spacing:-0.146px;color:#25262c;">Hlavní</span></div><div class="t" style="left:1796.6px;top:1095px;"><span style="font-size:15.2px;letter-spacing:0.219px;color:#25262c;">pc</span></div><div class="t" style="right:411.70000000000005px;top:1095px;"><span style="font-size:15.2px;letter-spacing:0.094px;color:#25262c;">2</span></div><div class="t" style="right:288.6999999999998px;top:1095px;"><span style="font-size:15.2px;letter-spacing:0.094px;color:#25262c;">1</span></div><div class="t" style="right:156.69999999999982px;top:1095px;"><span style="font-size:15.2px;letter-spacing:0.094px;color:#25262c;">1</span></div><svg class="ic" width="21.3" height="21.3" viewBox="0 0 24 24" fill="none" stroke="currentColor" stroke-width="2.25" style="color:#23a882;left:2335.65px;top:1094.9499999999998px;"><path d="M4.500 3.500h11.500l4.500 4.500v11a1.500 1.500 0 0 1-1.500 1.500h-14.500a1.500 1.500 0 0 1-1.500-1.500v-14a1.500 1.500 0 0 1 1.500-1.500z" stroke-linejoin="round"/><path d="M7.500 3.500v5h7v-5"/><circle cx="12" cy="14.800" r="2.700"/></svg><div class="t" style="left:250.3px;top:1131px;"><span style="font-size:15.2px;letter-spacing:0.049px;color:#25262c;">18.11.2025 09:24</span></div><div class="t" style="right:1943px;top:1131px;"><span style="font-size:15.2px;letter-spacing:0.086px;color:#25262c;">18</span></div><div class="t" style="left:603.8px;top:1131px;"><span style="font-size:15.2px;letter-spacing:-0.103px;color:#25262c;">Zboží</span></div><div class="t" style="left:1037.8px;top:1131px;"><span style="font-size:15.2px;letter-spacing:-0.103px;color:#5c6bc0;">Zboží</span></div><div class="t" style="left:1234.8px;top:1131px;"><span style="font-size:15.2px;letter-spacing:-0.146px;color:#25262c;">Hlavní</span></div><div class="t" style="left:1796.6px;top:1131px;"><span style="font-size:15.2px;letter-spacing:0.219px;color:#25262c;">pc</span></div><div class="t" style="right:411.70000000000005px;top:1131px;"><span style="font-size:15.2px;letter-spacing:0.094px;color:#25262c;">3</span></div><div class="t" style="right:288.6999999999998px;top:1131px;"><span style="font-size:15.2px;letter-spacing:0.094px;color:#25262c;">1</span></div><div class="t" style="right:156.69999999999982px;top:1131px;"><span style="font-size:15.2px;letter-spacing:0.094px;color:#25262c;">1</span></div><svg class="ic" width="21.3" height="21.3" viewBox="0 0 24 24" fill="none" stroke="currentColor" stroke-width="2.25" style="color:#23a882;left:2335.65px;top:1130.9499999999998px;"><path d="M4.500 3.500h11.500l4.500 4.500v11a1.500 1.500 0 0 1-1.500 1.500h-14.500a1.500 1.500 0 0 1-1.500-1.500v-14a1.500 1.500 0 0 1 1.500-1.500z" stroke-linejoin="round"/><path d="M7.500 3.500v5h7v-5"/><circle cx="12" cy="14.800" r="2.700"/></svg><div class="t" style="left:250.3px;top:1167px;"><span style="font-size:15.2px;letter-spacing:0.049px;color:#25262c;">18.11.2025 09:24</span></div><div class="t" style="right:1943px;top:1167px;"><span style="font-size:15.2px;letter-spacing:0.086px;color:#25262c;">27</span></div><div class="t" style="left:603.8px;top:1167px;"><span style="font-size:15.2px;letter-spacing:-0.034px;color:#25262c;">Deska stolu</span></div><div class="t" style="left:1037.8px;top:1167px;"><span style="font-size:15.2px;letter-spacing:0.040px;color:#5c6bc0;">Polotovar</span></div><div class="t" style="left:1234.8px;top:1167px;"><span style="font-size:15.2px;letter-spacing:-0.146px;color:#25262c;">Hlavní</span></div><div class="t" style="left:1796.6px;top:1167px;"><span style="font-size:15.2px;letter-spacing:0.219px;color:#25262c;">pc</span></div><div class="t" style="right:411.70000000000005px;top:1167px;"><span style="font-size:15.2px;letter-spacing:0.094px;color:#25262c;">2</span></div><div class="t" style="right:288.6999999999998px;top:1167px;"><span style="font-size:15.2px;letter-spacing:0.094px;color:#25262c;">1</span></div><div class="t" style="right:156.69999999999982px;top:1167px;"><span style="font-size:15.2px;letter-spacing:0.094px;color:#25262c;">1</span></div><svg class="ic" width="21.3" height="21.3" viewBox="0 0 24 24" fill="none" stroke="currentColor" stroke-width="2.25" style="color:#23a882;left:2335.65px;top:1166.9499999999998px;"><path d="M4.500 3.500h11.500l4.500 4.500v11a1.500 1.500 0 0 1-1.500 1.500h-14.500a1.500 1.500 0 0 1-1.500-1.500v-14a1.500 1.500 0 0 1 1.500-1.500z" stroke-linejoin="round"/><path d="M7.500 3.500v5h7v-5"/><circle cx="12" cy="14.800" r="2.700"/></svg><div class="t" style="left:250.3px;top:1203px;"><span style="font-size:15.2px;letter-spacing:0.049px;color:#25262c;">18.11.2025 09:24</span></div><div class="t" style="right:1943px;top:1203px;"><span style="font-size:15.2px;letter-spacing:0.086px;color:#25262c;">27</span></div><div class="t" style="left:603.8px;top:1203px;"><span style="font-size:15.2px;letter-spacing:-0.034px;color:#25262c;">Deska stolu</span></div><div class="t" style="left:1037.8px;top:1203px;"><span style="font-size:15.2px;letter-spacing:0.040px;color:#5c6bc0;">Polotovar</span></div><div class="t" style="left:1234.8px;top:1203px;"><span style="font-size:15.2px;letter-spacing:-0.146px;color:#25262c;">Hlavní</span></div><div class="t" style="right:868.7px;top:1203px;"><span style="font-size:15.2px;letter-spacing:0.086px;color:#25262c;">25</span></div><div class="t" style="left:1680.0px;top:1203px;"><span style="font-size:15.2px;letter-spacing:0.086px;color:#25262c;">25</span></div><div class="t" style="left:1796.6px;top:1203px;"><span style="font-size:15.2px;letter-spacing:0.219px;color:#25262c;">pc</span></div><div class="t" style="right:411.70000000000005px;top:1203px;"><span style="font-size:15.2px;letter-spacing:0.094px;color:#25262c;">1</span></div><div class="t" style="right:288.6999999999998px;top:1203px;"><span style="font-size:15.2px;letter-spacing:0.094px;color:#25262c;">1</span></div><div class="t" style="right:156.69999999999982px;top:1203px;"><span style="font-size:15.2px;letter-spacing:0.094px;color:#25262c;">1</span></div><svg class="ic" width="21.3" height="21.3" viewBox="0 0 24 24" fill="none" stroke="currentColor" stroke-width="2.25" style="color:#23a882;left:2335.65px;top:1202.9499999999998px;"><path d="M4.500 3.500h11.500l4.500 4.500v11a1.500 1.500 0 0 1-1.500 1.500h-14.500a1.500 1.500 0 0 1-1.500-1.500v-14a1.500 1.500 0 0 1 1.500-1.500z" stroke-linejoin="round"/><path d="M7.500 3.500v5h7v-5"/><circle cx="12" cy="14.800" r="2.700"/></svg><div class="t" style="left:250.3px;top:1239px;"><span style="font-size:15.2px;letter-spacing:0.049px;color:#25262c;">18.11.2025 09:24</span></div><div class="t" style="right:1943px;top:1239px;"><span style="font-size:15.2px;letter-spacing:0.086px;color:#25262c;">27</span></div><div class="t" style="left:603.8px;top:1239px;"><span style="font-size:15.2px;letter-spacing:-0.034px;color:#25262c;">Deska stolu</span></div><div class="t" style="left:1037.8px;top:1239px;"><span style="font-size:15.2px;letter-spacing:0.040px;color:#5c6bc0;">Polotovar</span></div><div class="t" style="left:1234.8px;top:1239px;"><span style="font-size:15.2px;letter-spacing:-0.146px;color:#25262c;">Hlavní</span></div><div class="t" style="right:868.7px;top:1239px;"><span style="font-size:15.2px;letter-spacing:0.086px;color:#25262c;">26</span></div><div class="t" style="left:1680.0px;top:1239px;"><span style="font-size:15.2px;letter-spacing:0.086px;color:#25262c;">26</span></div><div class="t" style="left:1796.6px;top:1239px;"><span style="font-size:15.2px;letter-spacing:0.219px;color:#25262c;">pc</span></div><div class="t" style="right:411.70000000000005px;top:1239px;"><span style="font-size:15.2px;letter-spacing:0.094px;color:#25262c;">5</span></div><div class="t" style="right:288.6999999999998px;top:1239px;"><span style="font-size:15.2px;letter-spacing:0.094px;color:#25262c;">1</span></div><div class="t" style="right:156.69999999999982px;top:1239px;"><span style="font-size:15.2px;letter-spacing:0.094px;color:#25262c;">1</span></div><svg class="ic" width="21.3" height="21.3" viewBox="0 0 24 24" fill="none" stroke="currentColor" stroke-width="2.25" style="color:#23a882;left:2335.65px;top:1238.9499999999998px;"><path d="M4.500 3.500h11.500l4.500 4.500v11a1.500 1.500 0 0 1-1.500 1.500h-14.500a1.500 1.500 0 0 1-1.500-1.500v-14a1.500 1.500 0 0 1 1.500-1.500z" stroke-linejoin="round"/><path d="M7.500 3.500v5h7v-5"/><circle cx="12" cy="14.800" r="2.700"/></svg><div class="t" style="left:250.3px;top:1275px;"><span style="font-size:15.2px;letter-spacing:0.049px;color:#25262c;">18.11.2025 09:24</span></div><div class="t" style="right:1943px;top:1275px;"><span style="font-size:15.2px;letter-spacing:0.086px;color:#25262c;">27</span></div><div class="t" style="left:603.8px;top:1275px;"><span style="font-size:15.2px;letter-spacing:-0.034px;color:#25262c;">Deska stolu</span></div><div class="t" style="left:1037.8px;top:1275px;"><span style="font-size:15.2px;letter-spacing:0.040px;color:#5c6bc0;">Polotovar</span></div><div class="t" style="left:1234.8px;top:1275px;"><span style="font-size:15.2px;letter-spacing:-0.146px;color:#25262c;">Hlavní</span></div><div class="t" style="right:868.7px;top:1275px;"><span style="font-size:15.2px;letter-spacing:0.086px;color:#25262c;">90</span></div><div class="t" style="left:1680.0px;top:1275px;"><span style="font-size:15.2px;letter-spacing:0.086px;color:#25262c;">90</span></div><div class="t" style="left:1796.6px;top:1275px;"><span style="font-size:15.2px;letter-spacing:0.219px;color:#25262c;">pc</span></div><div class="t" style="right:411.70000000000005px;top:1275px;"><span style="font-size:15.2px;letter-spacing:0.094px;color:#25262c;">2</span></div><div class="t" style="right:288.6999999999998px;top:1275px;"><span style="font-size:15.2px;letter-spacing:0.094px;color:#25262c;">1</span></div><div class="t" style="right:156.69999999999982px;top:1275px;"><span style="font-size:15.2px;letter-spacing:0.094px;color:#25262c;">1</span></div><svg class="ic" width="21.3" height="21.3" viewBox="0 0 24 24" fill="none" stroke="currentColor" stroke-width="2.25" style="color:#23a882;left:2335.65px;top:1274.9499999999998px;"><path d="M4.500 3.500h11.500l4.500 4.500v11a1.500 1.500 0 0 1-1.500 1.500h-14.500a1.500 1.500 0 0 1-1.500-1.500v-14a1.500 1.500 0 0 1 1.500-1.500z" stroke-linejoin="round"/><path d="M7.500 3.500v5h7v-5"/><circle cx="12" cy="14.800" r="2.700"/></svg><div class="a" style="left:2381px;top:62px;width:19px;height:1225px;background:#fafafa"></div><div class="a" style="left:2385px;top:86px;width:11px;height:742px;border-radius:6px;background:#8b8b8b"></div><svg class="ic" style="left:2383.500px;top:68.500px" width="14" height="10" viewBox="0 0 14 10"><path d="M2 9L7 2l5 7z" fill="#8b8b8b" stroke="#8b8b8b" stroke-width="2" stroke-linejoin="round"/></svg><svg class="ic" style="left:2383.500px;top:1271.500px" width="14" height="10" viewBox="0 0 14 10"><path d="M2 1L7 8l5-7z" fill="#8b8b8b" stroke="#8b8b8b" stroke-width="2" stroke-linejoin="round"/></svg><div class="a" style="left:225px;top:0;width:2175px;height:62px;background:#fff;box-shadow:0 1px 3px rgba(0,0,0,.2)"></div><svg class="ic" width="24" height="24" viewBox="0 0 24 24" fill="none" stroke="currentColor" stroke-width="2.1" style="color:#5c6bc0;left:254.0px;top:18.5px;"><rect x="2.5" y="3.5" width="19" height="17" rx="2" stroke-linecap="round" stroke-linejoin="round"/><path d="M2.5 9.2h19M2.5 14.8h19M8.8 3.5v17" stroke-linecap="round" stroke-linejoin="round"/></svg><div class="t" style="left:288px;top:21px;height:24px;line-height:24px;top:19px"><span style="font-size:20.2px;letter-spacing:-0.026px;-webkit-text-stroke:0.45px;color:#1f2026;">Inventura: 1 Inventura 2025 - Hlavní sklad</span></div><svg class="ic" width="22" height="22" viewBox="0 0 24 24" fill="none" stroke="currentColor" stroke-width="2.6" style="color:#21b584;left:1632.3px;top:19.5px;"><circle cx="12" cy="12" r="10"/><path d="M7.2 12.4l3.3 3.3 6.3-6.8" stroke-linecap="round" stroke-linejoin="round"/></svg><div class="t" style="left:1666px;top:21px;"><span style="font-size:14.2px;letter-spacing:0.097px;-webkit-text-stroke:0.45px;color:#8b8d9b;">08:23</span></div><svg class="ic" width="24.5" height="24.5" viewBox="0 0 24 24" fill="none" stroke="currentColor" stroke-width="2.3" style="color:#8b8d9b;left:1719.75px;top:18.45px;"><path d="M12 2.2l2.2 1.6 2.7-.3 1.1 2.5 2.5 1.1-.3 2.7 1.6 2.2-1.6 2.2.3 2.7-2.5 1.1-1.1 2.5-2.7-.3-2.2 1.6-2.2-1.6-2.7.3-1.1-2.5-2.5-1.1.3-2.7L2.2 12l1.6-2.2-.3-2.7 2.5-1.1 1.1-2.5 2.7.3z" stroke-linejoin="round"/><path d="M14.3 9.3c-.4-.9-1.3-1.3-2.4-1.3-1.300 0-2.300.7-2.300 1.800 0 2.600 4.900 1.300 4.900 4 0 1.200-1.100 1.900-2.500 1.900-1.300 0-2.300-.6-2.600-1.600M12 6.300v1.700M12 15.700v1.800" stroke-linecap="round" stroke-linejoin="round" stroke-width="1.7"/></svg><div class="t" style="left:1754px;top:21px;"><span style="font-size:14.2px;letter-spacing:-0.065px;-webkit-text-stroke:0.45px;color:#8b8d9b;">Výchozí</span></div><svg class="ic" width="19.5" height="19.5" viewBox="0 0 24 24" fill="none" stroke="currentColor" stroke-width="2.5" style="color:#8b8d9b;left:1824.25px;top:21.25px;"><circle cx="12" cy="7.800" r="4.600"/><path d="M4 21v-1.500c0-3 2.200-4.800 5-4.800h6c2.800 0 5 1.800 5 4.800V21z" stroke-linejoin="round"/></svg><div class="t" style="left:1857px;top:21px;"><span style="font-size:14.2px;letter-spacing:-0.019px;-webkit-text-stroke:0.45px;color:#8b8d9b;">Stanislav Dulina</span></div><svg class="ic" width="24" height="24" viewBox="0 0 24 24" fill="none" stroke="currentColor" stroke-width="2.3" style="color:#8b8d9b;left:1976.7px;top:18.4px;"><circle cx="12" cy="12" r="10"/><path d="M2 12h20M3.500 7h17M3.500 17h17"/><ellipse cx="12" cy="12" rx="4.500" ry="10"/></svg><div class="t" style="left:2012px;top:21px;"><span style="font-size:14.2px;letter-spacing:-0.007px;-webkit-text-stroke:0.45px;color:#8b8d9b;">Čeština</span></div><svg class="ic" width="24" height="24" viewBox="0 0 24 24" fill="none" stroke="currentColor" stroke-width="2.3" style="color:#8b8d9b;left:2078.0px;top:19.0px;"><path d="M16 3.200a9.500 9.500 0 1 0 5 14.600A8.500 8.500 0 0 1 16 3.200z" stroke-linecap="round" stroke-linejoin="round"/></svg><svg class="ic" width="24" height="24" viewBox="0 0 24 24" fill="none" stroke="currentColor" stroke-width="2.3" style="color:#8b8d9b;left:2122.5px;top:19.0px;"><path d="M12 1.500v3M12 10v2.500M12 18v4.500" stroke-linecap="round" stroke-linejoin="round"/><path d="M3.500 4.500h14.500l3 2.750-3 2.750H3.500zM20.500 12.500H6.500l-3 2.750 3 2.750h14z" stroke-linecap="round" stroke-linejoin="round"/></svg><svg class="ic" width="24" height="24" viewBox="0 0 24 24" fill="none" stroke="currentColor" stroke-width="2.3" style="color:#8b8d9b;left:2168.0px;top:19.0px;"><rect x="2.500" y="8" width="19" height="4.500" rx=".8"/><path d="M4 12.500v8.500h16v-8.500M12 8v13" stroke-linecap="round" stroke-linejoin="round"/><path d="M12 8c-1-3.500-3-5.500-5-5-2 .6-1.500 5 1 5zM12 8c1-3.500 3-5.500 5-5 2 .6 1.500 5-1 5z" stroke-linecap="round" stroke-linejoin="round"/></svg><svg class="ic" width="24" height="24" viewBox="0 0 24 24" fill="none" stroke="currentColor" stroke-width="2.3" style="color:#8b8d9b;left:2212.5px;top:19.0px;"><path d="M12 3c-4 0-6 3-6 6.500 0 4-1.200 6-3 7.500h18c-1.800-1.500-3-3.500-3-7.500C18 6 16 3 12 3zM10 20.500a2 2 0 0 0 4 0" stroke-linecap="round" stroke-linejoin="round"/><path d="M12 1.500V3" stroke-linecap="round" stroke-linejoin="round"/></svg><div class="a" style="left:2225.500px;top:11px;width:19px;height:19px;border-radius:50%;background:#e9505c"></div><div class="t" style="left:2232.6px;top:10px;"><span style="font-size:9.5px;letter-spacing:0.156px;font-weight:700;color:#fff;">1</span></div><svg class="ic" width="24" height="24" viewBox="0 0 24 24" fill="none" stroke="currentColor" stroke-width="2.3" style="color:#8b8d9b;left:2258.0px;top:19.0px;"><circle cx="12" cy="12" r="10"/><path d="M9 9.500a3 3 0 1 1 4.500 2.600c-1 .6-1.500 1.200-1.500 2.400" stroke-linecap="round" stroke-linejoin="round"/><circle cx="12" cy="17.600" r="1.200" fill="currentColor" stroke="none"/></svg><svg class="ic" width="24" height="24" viewBox="0 0 24 24" fill="none" stroke="currentColor" stroke-width="2.3" style="color:#8b8d9b;left:2303.0px;top:19.0px;"><circle cx="10" cy="10" r="7.500"/><path d="M15.500 15.500L22 22" stroke-linecap="round"/></svg><svg class="ic" width="24" height="24" viewBox="0 0 24 24" fill="none" stroke="currentColor" stroke-width="2.3" style="color:#8b8d9b;left:2348.0px;top:19.0px;"><path d="M9 3.500H5.500a2 2 0 0 0-2 2v13a2 2 0 0 0 2 2H9M9 12h12.500M16 6l6 6-6 6" stroke-linecap="round" stroke-linejoin="round"/></svg><div class="a" style="left:225px;top:1287px;width:2175px;height:63px;background:#fff;box-shadow:0 -1px 3px rgba(0,0,0,.16)"></div><svg class="ic" width="24" height="24" viewBox="0 0 24 24" fill="none" stroke="currentColor" stroke-width="2.3" style="color:#8b8d9b;left:247.2px;top:1304.3px;"><path d="M5.300 6.800A9.200 9.200 0 1 1 3.500 16" stroke-linecap="round" stroke-linejoin="round"/><path d="M1.200 2.800v7h7z" fill="currentColor" stroke="none"/><path d="M11.800 7.500v5.300l3.700 2.300" stroke-linecap="round" stroke-linejoin="round"/></svg><svg class="ic" width="24" height="24" viewBox="0 0 24 24" fill="none" stroke="currentColor" stroke-width="2.3" style="color:#8b8d9b;left:288.0px;top:1305.5px;"><path d="M11.500 5.100H1.600v13.800h19.800V14" stroke-linejoin="round" stroke-linecap="butt"/><path d="M18.700.9A4.400 4.400 0 1 1 18.500 7.600" stroke-linecap="round" stroke-linejoin="round"/><path d="M15.600.4l4.200-1.200-.9 4.200z" fill="currentColor" stroke="none"/></svg><div class="t" style="left:327px;top:1308px;"><span style="font-size:15.9px;letter-spacing:0.051px;color:#9193a0;">18.11.2025 10:22</span></div><div class="btn" style="left:697.3px;width:174.4000000000001px"></div><svg class="ic" width="18" height="18" viewBox="0 0 24 24" fill="none" stroke="currentColor" stroke-width="2.7" style="color:#4f5bbd;left:714.3px;top:1309.3px;"><rect x="2.500" y="4.500" width="19" height="15" rx="2"/><path d="M2.500 8l8 5.500a2.600 2.600 0 0 0 3 0l8-5.500" stroke-linecap="round" stroke-linejoin="round"/></svg><div class="t" style="left:737.6999999999999px;top:1308px;"><span style="font-size:15.7px;letter-spacing:-0.508px;-webkit-text-stroke:0.45px;color:#4f5bbd;">ODESLAT EMAIL</span></div><div class="btn" style="left:886px;width:104.70000000000005px"></div><svg class="ic" width="17" height="17" viewBox="0 0 24 24" fill="none" stroke="currentColor" stroke-width="2.7" style="color:#4f5bbd;left:903.0px;top:1309.8px;"><path d="M20.500 3.500v6h-6" stroke-linecap="round" stroke-linejoin="round"/><path d="M20 9.500A8.700 8.700 0 1 0 20.700 14" stroke-linecap="round" stroke-linejoin="round"/></svg><div class="t" style="left:926.7px;top:1308px;"><span style="font-size:15.7px;letter-spacing:-1.100px;-webkit-text-stroke:0.45px;color:#4f5bbd;">RESET</span></div><div class="btn" style="left:1005px;width:222.70000000000005px"></div><svg class="ic" width="16" height="16" viewBox="0 0 24 24" fill="none" stroke="currentColor" stroke-width="2.7" style="color:#4f5bbd;left:1020.8px;top:1310.3px;"><path d="M12 4v16M4 12h16" stroke-linecap="round"/></svg><div class="t" style="left:1041.7px;top:1308px;"><span style="font-size:15.7px;letter-spacing:-0.684px;-webkit-text-stroke:0.45px;color:#4f5bbd;">PŘEPOČÍTAT HODNOTU</span></div><div class="btn dis" style="left:1242.3px;width:134.4000000000001px"></div><div class="a" style="left:1257.500px;top:1298px;width:119.20000000000005px;height:40px;background:rgba(0,0,0,.075);border-radius:0 5px 5px 0"></div><svg class="ic" width="19" height="19" viewBox="0 0 24 24" fill="none" stroke="currentColor" stroke-width="2.7" style="color:#b0b0b0;left:1259.0px;top:1308.8px;"><path d="M12 2.500v12.500M7.500 10.500l4.500 4.500 4.500-4.500" stroke-linecap="round" stroke-linejoin="round"/><path d="M6.500 14H3.500a1.500 1.500 0 0 0-1.500 1.500v4.500A1.500 1.500 0 0 0 3.500 21.500h17a1.500 1.500 0 0 0 1.500-1.500v-4.500a1.500 1.500 0 0 0-1.500-1.500H17.500" stroke-linecap="round" stroke-linejoin="round"/></svg><div class="t" style="left:1284.3px;top:1308px;"><span style="font-size:15.7px;letter-spacing:-0.688px;-webkit-text-stroke:0.45px;color:#b0b0b0;">STAHUJI…</span></div><div class="btn" style="left:1390px;width:368.70000000000005px"></div><svg class="ic" width="19" height="19" viewBox="0 0 24 24" fill="none" stroke="currentColor" stroke-width="2.7" style="color:#4f5bbd;left:1407.5px;top:1308.8px;"><path d="M12 16.500V3M7 8l5-5 5 5" stroke-linecap="round" stroke-linejoin="round"/><path d="M7.500 14H3.500a1.500 1.500 0 0 0-1.500 1.500v4.500A1.500 1.500 0 0 0 3.500 21.500h17a1.500 1.500 0 0 0 1.500-1.500v-4.500a1.500 1.500 0 0 0-1.500-1.500H16.500" stroke-linecap="round" stroke-linejoin="round"/><circle cx="18" cy="17.800" r="1.100" fill="currentColor" stroke="none"/></svg><div class="t" style="left:1432.7px;top:1308px;"><span style="font-size:15.7px;letter-spacing:-0.505px;-webkit-text-stroke:0.45px;color:#4f5bbd;">NAHRÁT INVENTURNÍ ZÁZNAMY Z EXCELU</span></div><div class="btn" style="left:1773.3px;width:209.4000000000001px"></div><svg class="ic" width="17" height="17" viewBox="0 0 24 24" fill="none" stroke="currentColor" stroke-width="2.7" style="color:#4f5bbd;left:1789.0px;top:1309.8px;"><rect x="3.500" y="2.500" width="17" height="19" rx="1.500"/><path d="M3.500 8h17"/><path d="M7.500 12h1M11.500 12h1M15.500 12h1M7.500 15h1M11.500 15h1M15.500 15h1M7.500 18h1M11.500 18h1M15.500 18h1" stroke-width="1.600"/></svg><div class="t" style="left:1811.0px;top:1308px;"><span style="font-size:15.7px;letter-spacing:-0.627px;-webkit-text-stroke:0.45px;color:#4f5bbd;">ZPRACOVAT POHYBY</span></div><div class="btn dis" style="left:1996px;width:267.3000000000002px"></div><svg class="ic" width="16" height="16" viewBox="0 0 24 24" fill="none" stroke="currentColor" stroke-width="2.7" style="color:#a3a3a3;left:2011.7px;top:1310.3px;"><path d="M12 4v16M4 12h16" stroke-linecap="round"/></svg><div class="t" style="left:2032.3px;top:1308px;"><span style="font-size:15.7px;letter-spacing:-0.700px;-webkit-text-stroke:0.45px;color:#a3a3a3;">VYBRAT SKLADOVÉ POLOŽKY</span></div><div class="btn dis" style="left:2278.3px;width:108.39999999999964px"></div><svg class="ic" width="16.5" height="16.5" viewBox="0 0 24 24" fill="none" stroke="currentColor" stroke-width="2.7" style="color:#a3a3a3;left:2294.25px;top:1310.05px;"><path d="M4.500 3.500h11.500l4.500 4.500v11a1.500 1.500 0 0 1-1.500 1.500h-14.500a1.500 1.500 0 0 1-1.500-1.500v-14a1.500 1.500 0 0 1 1.500-1.500z" stroke-linejoin="round"/><path d="M7.500 3.500v5h7v-5"/><circle cx="12" cy="14.800" r="2.700"/></svg><div class="t" style="left:2316.0px;top:1308px;"><span style="font-size:15.7px;letter-spacing:-0.609px;-webkit-text-stroke:0.45px;color:#a3a3a3;">ULOŽIT</span></div><div class="a" style="left:0;top:0;width:225px;height:1350px;background:#2d303e"></div><div class="a" style="left:219.500px;top:63px;width:5.500px;height:254px;background:#5a647c"></div><svg class="ic" style="left:12.900px;top:15.500px" width="36" height="25" viewBox="0 0 36 25"><path d="M.5 24.200V20.800Q3.700 19.500 3.700 14V.8H9.600V14Q9.600 20 13.900 20Q18.200 20 18.200 14V8.100H23.400V14Q23.400 18.600 28 18.600H35.300V24.200H17.300L16.100 23.200L14.900 24.200H7.600L6.400 23.200L5.200 24.200Z" fill="#1ea7e4"/></svg><div class="t" style="left:54.3px;top:22px;height:24px;line-height:24px;top:20.300px"><span style="font-size:22.3px;letter-spacing:-1.215px;font-weight:700;color:#fff;letter-spacing:-.25px;-webkit-text-stroke:.6px;">FACTORIFY</span></div><svg class="ic" width="22" height="22" viewBox="0 0 24 24" fill="none" stroke="currentColor" stroke-width="2.85" style="color:#6f7384;left:191.7px;top:19.8px;"><path d="M1 4.600h22M1 12h22M1 19.400h22"/></svg><svg class="ic" width="18.8" height="18.8" viewBox="0 0 24 24" fill="none" stroke="currentColor" stroke-width="2.2" style="color:#8b8fa1;left:14.4px;top:71.1px;"><path d="M2.500 5v14.500h19.500" stroke-linecap="round" stroke-linejoin="round"/><path d="M6.500 16v-4.500l3-3.500 3 3.500 3-3.500 3 5v3z" stroke-linejoin="round"/></svg><div class="t" style="left:40.3px;top:71px;"><span style="font-size:14.2px;letter-spacing:-0.033px;-webkit-text-stroke:0.45px;color:#fff;">Denní report</span></div><svg class="ic" width="20" height="20" viewBox="0 0 24 24" fill="none" stroke="currentColor" stroke-width="2.2" style="color:#8b8fa1;left:13.8px;top:106.5px;"><path d="M4.200 20.500h15.600a1.500 1.500 0 0 0 1.300-.8A10.300 10.300 0 1 0 2.900 19.700a1.500 1.500 0 0 0 1.300.8z" stroke-linejoin="round"/><path d="M10.800 15.500l3.200-9" stroke-linecap="round" stroke-width="2.400"/><circle cx="10.800" cy="15.800" r="2" fill="currentColor" stroke="none"/></svg><div class="t" style="left:40.3px;top:107px;"><span style="font-size:14.2px;letter-spacing:0.045px;-webkit-text-stroke:0.45px;color:#fff;">Nástěnka</span></div><svg class="ic" width="18.8" height="18.8" viewBox="0 0 24 24" fill="none" stroke="currentColor" stroke-width="2.2" style="color:#8b8fa1;left:14.4px;top:143.1px;"><path d="M2.500 5v14.500h19.500" stroke-linecap="round" stroke-linejoin="round"/><path d="M7 16v-2M10.700 16v-6.500M14.400 16v-4.500M18.100 16v-9.500" stroke-linecap="butt" stroke-width="2.500"/></svg><div class="t" style="left:40.3px;top:143px;"><span style="font-size:14.2px;letter-spacing:-0.013px;-webkit-text-stroke:0.45px;color:#fff;">Reporty</span></div><svg class="ic" width="18.8" height="18.8" viewBox="0 0 24 24" fill="none" stroke="currentColor" stroke-width="2.2" style="color:#8b8fa1;left:14.4px;top:179.1px;"><rect x="2.500" y="2.500" width="19" height="19" rx="1"/><rect x="6" y="6" width="6" height="6" fill="currentColor" stroke="none"/><rect x="12" y="12" width="6" height="6" fill="currentColor" stroke="none"/></svg><div class="t" style="left:40.3px;top:179px;"><span style="font-size:14.2px;letter-spacing:-0.003px;-webkit-text-stroke:0.45px;color:#fff;">Workspace</span></div><div class="t" style="left:13.5px;top:219px;"><span style="font-size:13.3px;letter-spacing:-0.846px;font-weight:700;color:#9a9caa;">PRODEJ</span></div><svg class="ic" width="18.8" height="18.8" viewBox="0 0 24 24" fill="none" stroke="currentColor" stroke-width="2.2" style="color:#8b8fa1;left:14.4px;top:260.1px;"><rect x="3.500" y="2.500" width="17" height="19" rx="1"/><path d="M7 8h2M11.500 8H17M7 12h2M11.500 12H17M7 16h2M11.500 16H17"/></svg><div class="t" style="left:40.3px;top:260px;"><span style="font-size:14.2px;letter-spacing:0.040px;-webkit-text-stroke:0.45px;color:#fff;">Dodací listy</span></div><svg class="ic" width="21.5" height="21.5" viewBox="0 0 24 24" fill="none" stroke="currentColor" stroke-width="2.2" style="color:#8b8fa1;left:13.05px;top:294.75px;"><path d="M9.500 3.500c-4 0-7 2.500-7 5.500 0 1.500.7 2.800 1.800 3.800L3 15.500l3.500-1.200c.9.300 1.900.5 3 .5 4 0 7-2.400 7-5.600s-3-5.700-7-5.700z" stroke-linejoin="round"/><path d="M18.500 10.500c2 .8 3.300 2.500 3.300 4.300 0 1.300-.6 2.400-1.600 3.300l1 2.400-3-1c-.8.300-1.700.4-2.600.4-2.300 0-4.300-.9-5.400-2.300" stroke-linecap="round" stroke-linejoin="round"/><path d="M11 7.300c-.3-.5-.8-.7-1.500-.7-.9 0-1.500.4-1.500 1.100 0 1.500 3.100.8 3.100 2.400 0 .7-.7 1.100-1.600 1.100-.8 0-1.400-.300-1.700-.900M9.500 5.800v.8M9.500 11.300v.8" stroke-width="1.300" stroke-linecap="round" stroke-linejoin="round"/></svg><div class="t" style="left:40.3px;top:296px;"><span style="font-size:14.2px;letter-spacing:-0.042px;-webkit-text-stroke:0.45px;color:#fff;">Nabídky</span></div><svg class="ic" width="21.5" height="21.5" viewBox="0 0 24 24" fill="none" stroke="currentColor" stroke-width="2.2" style="color:#8b8fa1;left:13.05px;top:330.75px;"><path d="M1 14.500h22M1 20.500h22M3.200 14.500v6M12 14.500v6M20.800 14.500v6"/><rect x="6.500" y="3" width="11" height="8.500"/><path d="M10 3v3.500h4V3"/></svg><div class="t" style="left:40.3px;top:332px;"><span style="font-size:14.2px;letter-spacing:0.013px;-webkit-text-stroke:0.45px;color:#fff;">Palety</span></div><svg class="ic" width="18.8" height="18.8" viewBox="0 0 24 24" fill="none" stroke="currentColor" stroke-width="2.2" style="color:#8b8fa1;left:14.4px;top:368.1px;"><rect x="3.500" y="5" width="17" height="16.500" rx="1.500"/><path d="M3.500 10h17M8 2.500V6M16 2.500V6" stroke-linecap="round"/><rect x="7" y="13" width="4" height="4" fill="currentColor" stroke="none"/></svg><div class="t" style="left:40.3px;top:368px;"><span style="font-size:14.2px;letter-spacing:-0.036px;-webkit-text-stroke:0.45px;color:#fff;">Plán expedice</span></div><svg class="ic" width="22" height="22" viewBox="0 0 24 24" fill="none" stroke="currentColor" stroke-width="2.2" style="color:#8b8fa1;left:12.8px;top:402.5px;"><path d="M8 8H1.500v12.500h21V8H19" stroke-linejoin="round"/><path d="M8.500 3.500l9.500 9.500" stroke-width="3.600" stroke-linecap="round"/><path d="M17 12.500l3 3.300-.4-3.700" fill="currentColor" stroke-width="1"/><path d="M13.500 17H19" stroke-width="1.600"/><path d="M7 12.300c-.3-.5-.8-.7-1.400-.7-.8 0-1.400.4-1.400 1.100 0 1.500 2.900.8 2.900 2.300 0 .7-.6 1.100-1.500 1.100-.7 0-1.300-.3-1.600-.8M5.600 10.700v.9M5.600 16.100v.9" stroke-width="1.300" stroke-linecap="round" stroke-linejoin="round"/></svg><div class="t" style="left:40.3px;top:404px;"><span style="font-size:14.2px;letter-spacing:-0.041px;-webkit-text-stroke:0.45px;color:#fff;">Prodejní ceníky</span></div><svg class="ic" width="18.8" height="18.8" viewBox="0 0 24 24" fill="none" stroke="currentColor" stroke-width="2.2" style="color:#8b8fa1;left:14.4px;top:440.1px;"><path d="M5 2.500h9l5 5v14H5z" stroke-linejoin="round"/><path d="M14 2.500v5h5M8 6h3" stroke-linecap="round" stroke-linejoin="round"/><path d="M13.500 12.300c-.3-.5-.8-.8-1.500-.8-.9 0-1.600.5-1.600 1.300 0 1.800 3.300.9 3.300 2.800 0 .8-.7 1.300-1.700 1.300-.8 0-1.500-.4-1.800-1M12 10.300v1.200M12 16.900v1.200" stroke-width="1.400" stroke-linecap="round" stroke-linejoin="round"/></svg><div class="t" style="left:40.3px;top:440px;"><span style="font-size:14.2px;letter-spacing:-0.017px;-webkit-text-stroke:0.45px;color:#fff;">Prodejní objednávky</span></div><svg class="ic" width="20.5" height="20.5" viewBox="0 0 24 24" fill="none" stroke="currentColor" stroke-width="2.2" style="color:#8b8fa1;left:13.55px;top:475.25px;"><path d="M1.500 3.500h3l3 11.500h11.500l2.500-8.500h-16" stroke-linecap="round" stroke-linejoin="round"/><circle cx="9" cy="19.500" r="1.700"/><circle cx="17.500" cy="19.500" r="1.700"/></svg><div class="t" style="left:40.3px;top:476px;"><span style="font-size:14.2px;letter-spacing:-0.228px;-webkit-text-stroke:0.45px;color:#fff;">Rámcové prodejní objed…</span></div><div class="t" style="left:13.5px;top:516px;"><span style="font-size:13.3px;letter-spacing:-0.662px;font-weight:700;color:#9a9caa;">NÁKUP</span></div><svg class="ic" width="22" height="22" viewBox="0 0 24 24" fill="none" stroke="currentColor" stroke-width="2.2" style="color:#8b8fa1;left:12.8px;top:555.5px;"><path d="M8 8H1.500v12.500h21V8H19" stroke-linejoin="round"/><path d="M8.500 3.500l9.500 9.500" stroke-width="3.600" stroke-linecap="round"/><path d="M17 12.500l3 3.300-.4-3.700" fill="currentColor" stroke-width="1"/><path d="M13.500 17H19" stroke-width="1.600"/><path d="M7 12.300c-.3-.5-.8-.7-1.400-.7-.8 0-1.400.4-1.400 1.100 0 1.500 2.900.8 2.900 2.300 0 .7-.6 1.100-1.500 1.100-.7 0-1.300-.3-1.600-.8M5.600 10.700v.9M5.600 16.100v.9" stroke-width="1.300" stroke-linecap="round" stroke-linejoin="round"/></svg><div class="t" style="left:40.3px;top:557px;"><span style="font-size:14.2px;letter-spacing:-0.052px;-webkit-text-stroke:0.45px;color:#fff;">Nákupní ceníky</span></div><svg class="ic" width="18.8" height="18.8" viewBox="0 0 24 24" fill="none" stroke="currentColor" stroke-width="2.2" style="color:#8b8fa1;left:14.4px;top:593.1px;"><path d="M5 2.500h9l5 5v14H5z" stroke-linejoin="round"/><path d="M14 2.500v5h5M8 6h3" stroke-linecap="round" stroke-linejoin="round"/><path d="M13.500 12.300c-.3-.5-.8-.8-1.500-.8-.9 0-1.600.5-1.600 1.300 0 1.800 3.300.9 3.300 2.800 0 .8-.7 1.300-1.700 1.300-.8 0-1.500-.4-1.800-1M12 10.300v1.200M12 16.900v1.200" stroke-width="1.400" stroke-linecap="round" stroke-linejoin="round"/></svg><div class="t" style="left:40.3px;top:593px;"><span style="font-size:14.2px;letter-spacing:-0.024px;-webkit-text-stroke:0.45px;color:#fff;">Nákupní objednávky</span></div><svg class="ic" width="20.5" height="20.5" viewBox="0 0 24 24" fill="none" stroke="currentColor" stroke-width="2.2" style="color:#8b8fa1;left:13.55px;top:628.25px;"><path d="M1.500 3.500h3l3 11.500h11.500l2.500-8.500h-16" stroke-linecap="round" stroke-linejoin="round"/><circle cx="9" cy="19.500" r="1.700"/><circle cx="17.500" cy="19.500" r="1.700"/></svg><div class="t" style="left:40.3px;top:629px;"><span style="font-size:14.2px;letter-spacing:-0.258px;-webkit-text-stroke:0.45px;color:#fff;">Rámcové nákupní objed…</span></div><svg class="ic" width="18.8" height="18.8" viewBox="0 0 24 24" fill="none" stroke="currentColor" stroke-width="2.2" style="color:#8b8fa1;left:14.4px;top:665.1px;"><path d="M5 2.500h9l5 5v14H5z" stroke-linejoin="round"/><path d="M14 2.500v5h5M8 6h3" stroke-linecap="round" stroke-linejoin="round"/><path d="M13.500 12.300c-.3-.5-.8-.8-1.500-.8-.9 0-1.600.5-1.600 1.300 0 1.800 3.300.9 3.300 2.800 0 .8-.7 1.300-1.700 1.300-.8 0-1.500-.4-1.800-1M12 10.300v1.200M12 16.900v1.200" stroke-width="1.400" stroke-linecap="round" stroke-linejoin="round"/></svg><div class="t" style="left:40.3px;top:665px;"><span style="font-size:14.2px;letter-spacing:0.038px;-webkit-text-stroke:0.45px;color:#fff;">Textové objednávky</span></div><svg class="ic" width="18.8" height="18.8" viewBox="0 0 24 24" fill="none" stroke="currentColor" stroke-width="2.2" style="color:#8b8fa1;left:14.4px;top:701.1px;"><path d="M2.500 5.500v14h19.500" stroke-linecap="round" stroke-linejoin="round"/><path d="M6.500 15l4-4.500 3.500 3 5.500-6M16 7.500h3.500V11" stroke-linecap="round" stroke-linejoin="round"/></svg><div class="t" style="left:40.3px;top:701px;"><span style="font-size:14.2px;letter-spacing:-0.040px;-webkit-text-stroke:0.45px;color:#fff;">Výhled nákupů</span></div><div class="t" style="left:13.5px;top:741px;"><span style="font-size:13.3px;letter-spacing:-1.099px;font-weight:700;color:#9a9caa;">KOOPERACE</span></div><svg class="ic" width="17.5" height="17.5" viewBox="0 0 24 24" fill="none" stroke="currentColor" stroke-width="2.2" style="color:#8b8fa1;left:15.05px;top:782.75px;"><circle cx="18" cy="5" r="2.700"/><circle cx="6" cy="12" r="2.700"/><circle cx="18" cy="19" r="2.700"/><path d="M8.400 10.700l7.200-4.300M8.400 13.300l7.200 4.300"/></svg><div class="t" style="left:40.3px;top:782px;"><span style="font-size:14.2px;letter-spacing:-0.068px;-webkit-text-stroke:0.45px;color:#fff;">Kooperační ceníky</span></div><svg class="ic" width="18.8" height="18.8" viewBox="0 0 24 24" fill="none" stroke="currentColor" stroke-width="2.2" style="color:#8b8fa1;left:14.4px;top:818.1px;"><path d="M5 2.500h9l5 5v14H5z" stroke-linejoin="round"/><path d="M14 2.500v5h5M8 6h3" stroke-linecap="round" stroke-linejoin="round"/><path d="M13.500 12.300c-.3-.5-.8-.8-1.500-.8-.9 0-1.600.5-1.600 1.300 0 1.800 3.300.9 3.300 2.800 0 .8-.7 1.300-1.700 1.300-.8 0-1.500-.4-1.800-1M12 10.300v1.200M12 16.900v1.200" stroke-width="1.400" stroke-linecap="round" stroke-linejoin="round"/></svg><div class="t" style="left:40.3px;top:818px;"><span style="font-size:14.2px;letter-spacing:-0.042px;-webkit-text-stroke:0.45px;color:#fff;">Kooperační objednávky</span></div><svg class="ic" width="19.5" height="19.5" viewBox="0 0 24 24" fill="none" stroke="currentColor" stroke-width="2.2" style="color:#8b8fa1;left:14.05px;top:853.75px;"><path d="M10 6h12M10 12h12M10 18h12" stroke-linecap="round"/><path d="M2.500 5.500l1.500 1.500 3-3.200M2.500 11.500l1.500 1.500 3-3.200" stroke-linecap="round" stroke-linejoin="round"/><rect x="3" y="16.500" width="3" height="3"/></svg><div class="t" style="left:40.3px;top:854px;"><span style="font-size:14.2px;letter-spacing:-0.054px;-webkit-text-stroke:0.45px;color:#fff;">Kooperační plán</span></div><svg class="ic" width="18.8" height="18.8" viewBox="0 0 24 24" fill="none" stroke="currentColor" stroke-width="2.2" style="color:#8b8fa1;left:14.4px;top:890.1px;"><path d="M5 2.500h9l5 5v14H5z" stroke-linejoin="round"/><path d="M14 2.500v5h5M8 6h3" stroke-linecap="round" stroke-linejoin="round"/><path d="M13.500 12.300c-.3-.5-.8-.8-1.500-.8-.9 0-1.600.5-1.600 1.300 0 1.800 3.300.9 3.300 2.800 0 .8-.7 1.300-1.700 1.300-.8 0-1.500-.4-1.800-1M12 10.300v1.200M12 16.900v1.200" stroke-width="1.400" stroke-linecap="round" stroke-linejoin="round"/></svg><div class="t" style="left:40.3px;top:890px;"><span style="font-size:14.2px;letter-spacing:-0.217px;-webkit-text-stroke:0.45px;color:#fff;">Naplánované kooperačn…</span></div><div class="t" style="left:13.5px;top:930px;"><span style="font-size:13.3px;letter-spacing:-0.536px;font-weight:700;color:#9a9caa;">CRM</span></div><svg class="ic" width="20.5" height="20.5" viewBox="0 0 24 24" fill="none" stroke="currentColor" stroke-width="2.2" style="color:#8b8fa1;left:13.55px;top:970.25px;"><rect x="2" y="4" width="20" height="16" rx="1.500"/><circle cx="8" cy="10.500" r="2" fill="currentColor"/><path d="M4.500 16.500c0-2 1.500-3 3.500-3s3.500 1 3.500 3z" fill="currentColor" stroke="none"/><path d="M14 9.500h5.500M14 12.500h5.500M14 15.500h3.500" stroke-width="1.600"/></svg><div class="t" style="left:40.3px;top:971px;"><span style="font-size:14.2px;letter-spacing:-0.003px;-webkit-text-stroke:0.45px;color:#fff;">Adresy</span></div><svg class="ic" width="18.8" height="18.8" viewBox="0 0 24 24" fill="none" stroke="currentColor" stroke-width="2.2" style="color:#8b8fa1;left:14.4px;top:1007.1px;"><circle cx="12" cy="7.800" r="4.600"/><path d="M4 21v-1.500c0-3 2.200-4.800 5-4.800h6c2.800 0 5 1.800 5 4.800V21z" stroke-linejoin="round"/></svg><div class="t" style="left:40.3px;top:1007px;"><span style="font-size:14.2px;letter-spacing:0.151px;-webkit-text-stroke:0.45px;color:#fff;">Historie komunikace</span></div><svg class="ic" width="19.5" height="19.5" viewBox="0 0 24 24" fill="none" stroke="currentColor" stroke-width="2.2" style="color:#8b8fa1;left:14.05px;top:1042.75px;"><path d="M2.500 9.500l2.500-6h14l2.500 6v10.500a1 1 0 0 1-1 1h-17a1 1 0 0 1-1-1z" stroke-linejoin="round"/><path d="M2.500 9.500h19M12 3.500v6"/></svg><div class="t" style="left:40.3px;top:1043px;"><span style="font-size:14.2px;letter-spacing:0.009px;-webkit-text-stroke:0.45px;color:#fff;">Hodnocení dodavatelů</span></div><svg class="ic" width="18.8" height="18.8" viewBox="0 0 24 24" fill="none" stroke="currentColor" stroke-width="2.2" style="color:#8b8fa1;left:14.4px;top:1079.1px;"><circle cx="12" cy="7.800" r="4.600"/><path d="M4 21v-1.500c0-3 2.200-4.800 5-4.800h6c2.800 0 5 1.800 5 4.800V21z" stroke-linejoin="round"/></svg><div class="t" style="left:40.3px;top:1079px;"><span style="font-size:14.2px;letter-spacing:0.012px;-webkit-text-stroke:0.45px;color:#fff;">Lidé</span></div><svg class="ic" width="23" height="23" viewBox="0 0 24 24" fill="none" stroke="currentColor" stroke-width="2.2" style="color:#8b8fa1;left:12.3px;top:1113.0px;"><path d="M1 7.500h2.800v8.500H1zM20.200 7.500H23v8.500h-2.800z" fill="currentColor" stroke-width="1"/><path d="M3.800 8.500h2.700l2.500-1.700h3.500l1.500 1M20.200 8.500h-2.700l-2.500-1.700h-2.500l-4.300 3.700c-.5 1.200 1 2.300 2.500 1.500l1.800-1.200 5.200 4.500c.5.900-.3 2.200-1.700 1.700l-.8-.5c-.4 1.300-1.700 1.700-2.700.9-.9.800-2.200.8-3.100 0L5.500 14.900H3.800M20.200 14.900h-2.300" stroke-linecap="round" stroke-linejoin="round"/></svg><div class="t" style="left:40.3px;top:1115px;"><span style="font-size:14.2px;letter-spacing:0.086px;-webkit-text-stroke:0.45px;color:#fff;">Obchodní příležitosti</span></div><svg class="ic" width="19.5" height="19.5" viewBox="0 0 24 24" fill="none" stroke="currentColor" stroke-width="2.2" style="color:#8b8fa1;left:14.05px;top:1150.75px;"><rect x="2.500" y="4.500" width="19" height="15" rx="2"/><path d="M2.500 8l8 5.500a2.600 2.600 0 0 0 3 0l8-5.500" stroke-linecap="round" stroke-linejoin="round"/></svg><div class="t" style="left:40.3px;top:1151px;"><span style="font-size:14.2px;letter-spacing:0.099px;-webkit-text-stroke:0.45px;color:#fff;">Přijaté emaily</span></div><svg class="ic" width="21.5" height="21.5" viewBox="0 0 24 24" fill="none" stroke="currentColor" stroke-width="2.2" style="color:#8b8fa1;left:13.05px;top:1185.75px;"><path d="M1.500 21.500V9.500h4.500V5h2V3h1.500v2h2V3H13v2h1.500v5.500h3.500v2.500h4v8.500" stroke-linejoin="round"/><path d="M4 12.500h1.500M4 15.500h1.500M4 18.500h1.500M8.500 8.500H10M8.500 11.500H10M8.500 14.500H10M8.500 17.500H10M12 8.500h1M12 11.500h1M12 14.500h1.500M16 13.500h1.500M16 16.500h1.500M19 16.500h1.500M19 19h1.500" stroke-width="1.700"/></svg><div class="t" style="left:40.3px;top:1187px;"><span style="font-size:14.2px;letter-spacing:0.067px;-webkit-text-stroke:0.45px;color:#fff;">Skupiny společností</span></div><svg class="ic" width="18.8" height="18.8" viewBox="0 0 24 24" fill="none" stroke="currentColor" stroke-width="2.2" style="color:#8b8fa1;left:14.4px;top:1223.1px;"><path d="M5.500 21V3h13v18M3 21.500h18" stroke-linejoin="round"/><path d="M9 7h2M13 7h2M9 10.700h2M13 10.700h2M9 14.400h2M13 14.400h2" stroke-width="2"/><path d="M10.500 21.500v-3.500h3v3.500" stroke-width="1.700"/></svg><div class="t" style="left:40.3px;top:1223px;"><span style="font-size:14.2px;letter-spacing:0.134px;-webkit-text-stroke:0.45px;color:#fff;">Společnosti</span></div><svg class="ic" width="18.8" height="18.8" viewBox="0 0 24 24" fill="none" stroke="currentColor" stroke-width="2.2" style="color:#8b8fa1;left:14.4px;top:1259.1px;"><path d="M5.500 21V3h13v18M3 21.500h18" stroke-linejoin="round"/><path d="M9 7h2M13 7h2M9 10.700h2M13 10.700h2M9 14.400h2M13 14.400h2" stroke-width="2"/><path d="M10.500 21.500v-3.500h3v3.500" stroke-width="1.700"/></svg><div class="t" style="left:40.3px;top:1259px;"><span style="font-size:14.2px;letter-spacing:0.090px;-webkit-text-stroke:0.45px;color:#fff;">Výpadky společnosti</span></div><div class="t" style="left:13.5px;top:1299px;"><span style="font-size:13.3px;letter-spacing:-0.744px;font-weight:700;color:#9a9caa;">DOCHÁZKA</span></div><svg class="ic" width="18.8" height="18.8" viewBox="0 0 24 24" fill="none" stroke="currentColor" stroke-width="2.2" style="color:#8b8fa1;left:14.4px;top:1340.1px;"><rect x="3.500" y="5" width="17" height="16.500" rx="1.500"/><path d="M3.500 10h17M8 2.500V6M16 2.500V6" stroke-linecap="round"/><rect x="7" y="13" width="4" height="4" fill="currentColor" stroke="none"/></svg><div class="t" style="left:40.3px;top:1340px;"><span style="font-size:14.2px;letter-spacing:-0.103px;-webkit-text-stroke:0.45px;color:#fff;">Denní plán směn</span></div><div class="a" style="left:1156px;top:1224px;width:188px;height:188px;border-radius:50%;border:9.500px solid #ff12e6;background:rgba(255,0,232,.5)"></div></body></html>
